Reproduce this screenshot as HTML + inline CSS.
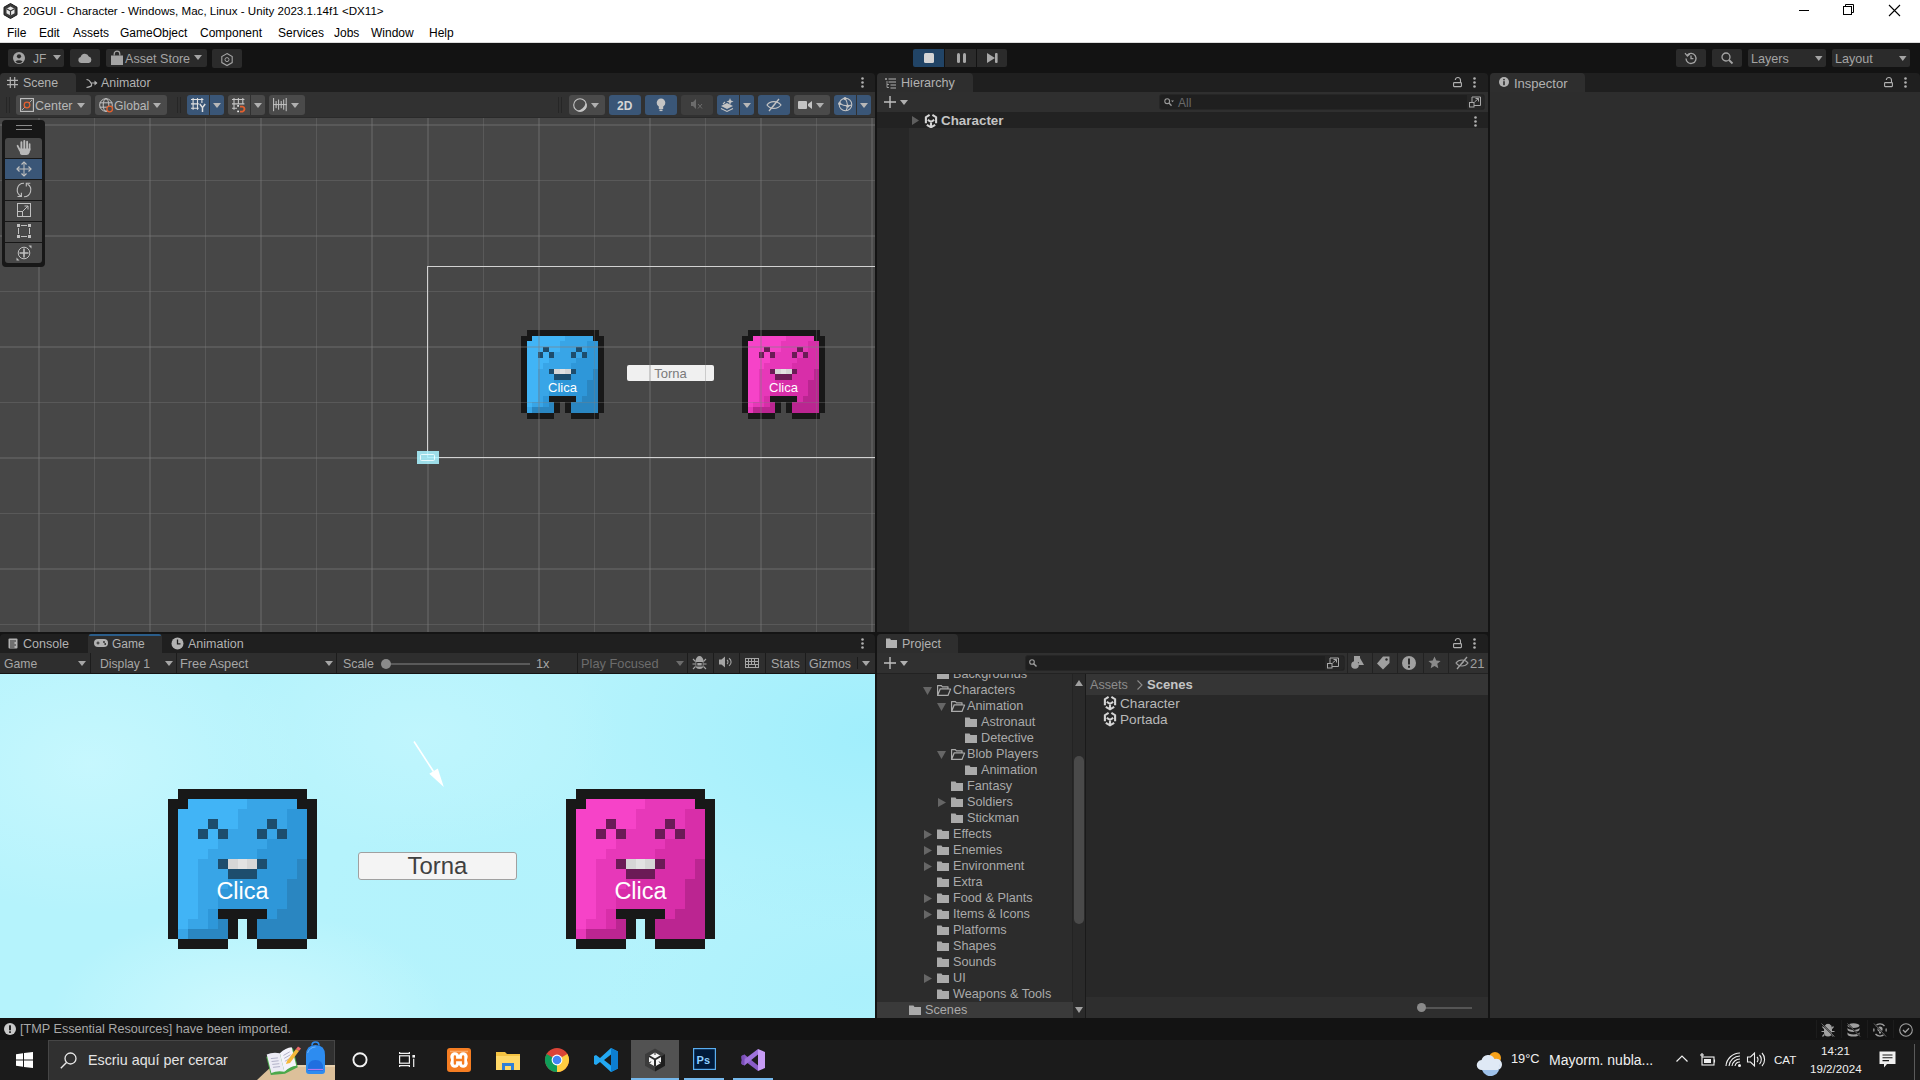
<!DOCTYPE html><html><head><meta charset="utf-8"><style>
*{margin:0;padding:0;box-sizing:border-box}
html,body{width:1920px;height:1080px;overflow:hidden;background:#141414;font-family:"Liberation Sans",sans-serif;}
.a{position:absolute}
.t{position:absolute;white-space:nowrap;line-height:1}
svg{position:absolute;overflow:visible}
</style></head><body>
<div class="a" style="left:0px;top:0px;width:1920px;height:42px;background:#ffffff;"></div>
<div class="a" style="left:0px;top:42px;width:1920px;height:1px;background:#dcdcdc;"></div>
<svg style="left:3px;top:3px;" width="15" height="16" viewBox="0 0 15 16"><path d="M7.5 0.5L14 4.2V11.8L7.5 15.5L1 11.8V4.2Z" fill="#3a3a3a" stroke="#1a1a1a" stroke-width="1"/><path d="M7.5 3.5L11.5 5.8V10.2L7.5 12.5L3.5 10.2V5.8Z" fill="#e8e8e8"/><path d="M7.5 8L7.5 12.5M7.5 8L3.5 5.8M7.5 8L11.5 5.8" stroke="#3a3a3a" stroke-width="1.2"/></svg>
<div class="t" style="left:23px;top:5px;font-size:11.6px;color:#000;">20GUI - Character - Windows, Mac, Linux - Unity 2023.1.14f1 &lt;DX11&gt;</div>
<div class="t" style="left:7px;top:27px;font-size:12px;color:#000;">File</div>
<div class="t" style="left:39px;top:27px;font-size:12px;color:#000;">Edit</div>
<div class="t" style="left:73px;top:27px;font-size:12px;color:#000;">Assets</div>
<div class="t" style="left:120px;top:27px;font-size:12px;color:#000;">GameObject</div>
<div class="t" style="left:200px;top:27px;font-size:12px;color:#000;">Component</div>
<div class="t" style="left:278px;top:27px;font-size:12px;color:#000;">Services</div>
<div class="t" style="left:334px;top:27px;font-size:12px;color:#000;">Jobs</div>
<div class="t" style="left:371px;top:27px;font-size:12px;color:#000;">Window</div>
<div class="t" style="left:429px;top:27px;font-size:12px;color:#000;">Help</div>
<div class="a" style="left:1799px;top:10px;width:10px;height:1px;background:#000;"></div>
<svg style="left:1843px;top:4px;" width="12" height="12" viewBox="0 0 12 12"><rect x="0.5" y="2.5" width="8" height="8" fill="none" stroke="#000" stroke-width="1"/><path d="M2.5 2.5V0.5H10.5V8.5H8.5" fill="none" stroke="#000" stroke-width="1"/></svg>
<svg style="left:1889px;top:5px;" width="11" height="11" viewBox="0 0 11 11"><path d="M0 0L11 11M11 0L0 11" stroke="#000" stroke-width="1.1"/></svg>
<div class="a" style="left:0px;top:43px;width:1920px;height:30px;background:#131313;"></div>
<div class="a" style="left:8px;top:49px;width:56px;height:18px;background:#2b2b2b;border-radius:2px"></div>
<svg style="left:13px;top:52px;" width="12" height="12" viewBox="0 0 12 12"><circle cx="6" cy="6" r="6" fill="#a4a4a4"/><circle cx="6" cy="4.3" r="2.1" fill="#2b2b2b"/><path d="M2.4 9.6A4.2 3 0 0 1 9.6 9.6A5 5 0 0 1 2.4 9.6Z" fill="#2b2b2b"/></svg>
<div class="t" style="left:33px;top:53px;font-size:12px;color:#a4a4a4;">JF</div>
<svg style="left:53px;top:55px;" width="8" height="5" viewBox="0 0 8 5"><path d="M0 0H8L4.0 5Z" fill="#a4a4a4"/></svg>
<div class="a" style="left:70px;top:49px;width:30px;height:18px;background:#2b2b2b;border-radius:2px"></div>
<svg style="left:78px;top:53px;" width="14" height="10" viewBox="0 0 14 10"><path d="M3 10A3 3 0 0 1 2.6 4.1A4.3 4.3 0 0 1 10.8 3.6A3.3 3.3 0 0 1 11 10Z" fill="#a4a4a4"/></svg>
<div class="a" style="left:106px;top:49px;width:101px;height:18px;background:#2b2b2b;border-radius:2px"></div>
<svg style="left:111px;top:51px;" width="12" height="14" viewBox="0 0 12 14"><path d="M3.2 4.5V3A2.8 2.8 0 0 1 8.8 3V4.5" fill="none" stroke="#a4a4a4" stroke-width="1.2"/><rect x="0" y="4.5" width="12" height="9.5" fill="#a4a4a4"/></svg>
<div class="t" style="left:125px;top:53px;font-size:12.6px;color:#a4a4a4;">Asset Store</div>
<svg style="left:194px;top:55px;" width="8" height="5" viewBox="0 0 8 5"><path d="M0 0H8L4.0 5Z" fill="#a4a4a4"/></svg>
<div class="a" style="left:212px;top:49px;width:30px;height:19px;background:#2b2b2b;border-radius:2px"></div>
<svg style="left:221px;top:53px;" width="12" height="13" viewBox="0 0 12 13"><path d="M6 0.6L11.2 3.6V9.6L6 12.6L0.8 9.6V3.6Z" fill="none" stroke="#a4a4a4" stroke-width="1.1"/><circle cx="6" cy="6.6" r="2" fill="none" stroke="#a4a4a4" stroke-width="1"/></svg>
<div class="a" style="left:913px;top:49px;width:31px;height:18px;background:#214466;border-radius:2px 0 0 2px"></div>
<div class="a" style="left:945px;top:49px;width:31px;height:18px;background:#2b2b2b;"></div>
<div class="a" style="left:977px;top:49px;width:30px;height:18px;background:#2b2b2b;border-radius:0 2px 2px 0"></div>
<div class="a" style="left:924px;top:53px;width:10px;height:10px;background:#d4d4d4;border-radius:1.5px"></div>
<div class="a" style="left:957px;top:53px;width:3px;height:10px;background:#a8a8a8;border-radius:1.5px"></div>
<div class="a" style="left:963px;top:53px;width:3px;height:10px;background:#a8a8a8;border-radius:1.5px"></div>
<svg style="left:987px;top:53px;" width="11" height="10" viewBox="0 0 11 10"><path d="M0 0L8 5L0 10Z" fill="#a8a8a8"/><rect x="8" y="0" width="2.6" height="10" rx="1" fill="#a8a8a8"/></svg>
<div class="a" style="left:1676px;top:49px;width:30px;height:18px;background:#2b2b2b;border-radius:2px"></div>
<svg style="left:1685px;top:52px;" width="12" height="12" viewBox="0 0 12 12"><path d="M2.2 3.2A5 5 0 1 1 1 6.5" fill="none" stroke="#a4a4a4" stroke-width="1.3"/><path d="M0 1.2L2.4 4.2L4.8 2" fill="none" stroke="#a4a4a4" stroke-width="1.2"/><path d="M6 3.4V6.6H8.4" fill="none" stroke="#a4a4a4" stroke-width="1.3"/></svg>
<div class="a" style="left:1712px;top:49px;width:30px;height:18px;background:#2b2b2b;border-radius:2px"></div>
<svg style="left:1721px;top:52px;" width="12" height="12" viewBox="0 0 12 12"><circle cx="5" cy="5" r="4" fill="none" stroke="#a4a4a4" stroke-width="1.3"/><path d="M8 8L11.5 11.5" stroke="#a4a4a4" stroke-width="1.8"/></svg>
<div class="a" style="left:1748px;top:49px;width:78px;height:18px;background:#2b2b2b;border-radius:2px"></div>
<div class="t" style="left:1751px;top:53px;font-size:12.6px;color:#a4a4a4;">Layers</div>
<svg style="left:1815px;top:56px;" width="7.5" height="5" viewBox="0 0 7.5 5"><path d="M0 0H7.5L3.75 5Z" fill="#a4a4a4"/></svg>
<div class="a" style="left:1832px;top:49px;width:78px;height:18px;background:#2b2b2b;border-radius:2px"></div>
<div class="t" style="left:1835px;top:53px;font-size:12.6px;color:#a4a4a4;">Layout</div>
<svg style="left:1899px;top:56px;" width="7.5" height="5" viewBox="0 0 7.5 5"><path d="M0 0H7.5L3.75 5Z" fill="#a4a4a4"/></svg>
<div class="a" style="left:0px;top:73px;width:875px;height:19px;background:#1f1f1f;border-radius:4px 4px 0 0"></div>
<div class="a" style="left:0px;top:73px;width:76px;height:19px;background:#313131;border-radius:4px 4px 0 0"></div>
<svg style="left:7px;top:77px;" width="11" height="11" viewBox="0 0 11 11"><path d="M3.3 0V11M7.7 0V11M0 3.3H11M0 7.7H11" stroke="#b2b2b2" stroke-width="1.2"/></svg>
<div class="t" style="left:23px;top:77px;font-size:12.4px;color:#b2b2b2;">Scene</div>
<svg style="left:86px;top:78px;" width="12" height="10" viewBox="0 0 12 10"><path d="M0.5 1.5C3 1.5 4 3 5 5C6 7 7 8.5 0.5 9.5M5 5H10.5" fill="none" stroke="#b2b2b2" stroke-width="1.2"/><path d="M8.5 2.5L11.5 5L8.5 7.5Z" fill="#b2b2b2"/></svg>
<div class="t" style="left:101px;top:77px;font-size:12.4px;color:#b2b2b2;">Animator</div>
<svg style="left:861px;top:77px;" width="3" height="11" viewBox="0 0 3 11"><circle cx="1.5" cy="1.5" r="1.3" fill="#b0b0b0"/><circle cx="1.5" cy="5.5" r="1.3" fill="#b0b0b0"/><circle cx="1.5" cy="9.5" r="1.3" fill="#b0b0b0"/></svg>
<div class="a" style="left:0px;top:92px;width:875px;height:26px;background:#313131;"></div>
<div class="a" style="left:0px;top:117px;width:875px;height:1px;background:#2a2a2a;"></div>
<div class="a" style="left:6px;top:97px;width:1px;height:16px;background:#262626;"></div>
<div class="a" style="left:9px;top:97px;width:1px;height:16px;background:#262626;"></div>
<div class="a" style="left:177px;top:97px;width:1px;height:16px;background:#262626;"></div>
<div class="a" style="left:180px;top:97px;width:1px;height:16px;background:#262626;"></div>
<div class="a" style="left:558px;top:97px;width:1px;height:16px;background:#262626;"></div>
<div class="a" style="left:561px;top:97px;width:1px;height:16px;background:#262626;"></div>
<div class="a" style="left:16px;top:95px;width:75px;height:20px;background:#4a4a4a;border-radius:3px"></div>
<svg style="left:20px;top:98px;" width="14" height="14" viewBox="0 0 14 14"><rect x="0.6" y="0.6" width="12.8" height="12.8" fill="none" stroke="#c4c4c4" stroke-width="1.1"/><path d="M2 12L12 2" stroke="#c4c4c4" stroke-width="0.8"/><circle cx="7" cy="7" r="2.8" fill="#4a4a4a" stroke="#e3602f" stroke-width="1.3"/></svg>
<div class="t" style="left:35px;top:100px;font-size:12.5px;color:#b8b8b8;">Center</div>
<svg style="left:77px;top:103px;" width="8" height="5" viewBox="0 0 8 5"><path d="M0 0H8L4.0 5Z" fill="#b0b0b0"/></svg>
<div class="a" style="left:95px;top:95px;width:72px;height:20px;background:#4a4a4a;border-radius:3px"></div>
<svg style="left:99px;top:98px;" width="14" height="14" viewBox="0 0 14 14"><circle cx="7" cy="7" r="6.3" fill="none" stroke="#c4c4c4" stroke-width="1"/><ellipse cx="7" cy="7" rx="2.8" ry="6.3" fill="none" stroke="#c4c4c4" stroke-width="1"/><path d="M0.7 4.8H13.3M0.7 9.2H13.3" stroke="#c4c4c4" stroke-width="1"/><circle cx="10.7" cy="11" r="2.8" fill="#4a4a4a" stroke="#e3602f" stroke-width="1.3"/></svg>
<div class="t" style="left:114px;top:100px;font-size:12.2px;color:#b8b8b8;">Global</div>
<svg style="left:153px;top:103px;" width="8" height="5" viewBox="0 0 8 5"><path d="M0 0H8L4.0 5Z" fill="#b0b0b0"/></svg>
<div class="a" style="left:187px;top:95px;width:22px;height:20px;background:#3a5677;border-radius:3px 0 0 3px"></div>
<div class="a" style="left:210px;top:95px;width:14px;height:20px;background:#3a5677;border-radius:0 3px 3px 0"></div>
<svg style="left:191px;top:98px;" width="15" height="14" viewBox="0 0 15 14"><path d="M2.1 0V11.7M6.5 0V11.7M10.9 0V5M0 1.5H12.4M0 5.9H8.5M0 10.2H8" stroke="#e0e0e0" stroke-width="1.1"/><rect x="7.7" y="5.4" width="7" height="9" fill="#3a5677"/><path d="M8.8 6L11.5 9.6L14.2 6M11.5 9.6V14" fill="none" stroke="#e0e0e0" stroke-width="1.5"/></svg>
<svg style="left:213px;top:103px;" width="8" height="5" viewBox="0 0 8 5"><path d="M0 0H8L4.0 5Z" fill="#b8b8b8"/></svg>
<div class="a" style="left:228px;top:95px;width:22px;height:20px;background:#4a4a4a;border-radius:3px 0 0 3px"></div>
<div class="a" style="left:251px;top:95px;width:14px;height:20px;background:#4a4a4a;border-radius:0 3px 3px 0"></div>
<svg style="left:232px;top:98px;" width="15" height="15" viewBox="0 0 15 15"><path d="M2 0V11.7M6.4 0V6M10.8 0V6M0 1.5H12.4M0 5.9H12.4M0 10.2H5" stroke="#c4c4c4" stroke-width="1.1"/><rect x="5.2" y="7" width="9.5" height="8" fill="#4a4a4a"/><rect x="5.3" y="7.1" width="1.6" height="1.6" fill="#fff"/><rect x="5.3" y="12.6" width="1.6" height="1.6" fill="#fff"/><path d="M8 8.6H10.6A2.6 2.6 0 0 1 10.6 13.6H8" fill="none" stroke="#e3602f" stroke-width="1.9"/></svg>
<svg style="left:254px;top:103px;" width="8" height="5" viewBox="0 0 8 5"><path d="M0 0H8L4.0 5Z" fill="#b0b0b0"/></svg>
<div class="a" style="left:269px;top:95px;width:36px;height:20px;background:#4a4a4a;border-radius:3px"></div>
<svg style="left:273px;top:98px;" width="14" height="14" viewBox="0 0 14 14"><path d="M0.6 0V13.2M13.2 0V13.2M0 6.6H13.8M3.1 3V10.2M5.6 1.5V11.7M8.2 3V10.2M10.7 1.5V11.7" stroke="#c4c4c4" stroke-width="1"/></svg>
<svg style="left:291px;top:103px;" width="8" height="5" viewBox="0 0 8 5"><path d="M0 0H8L4.0 5Z" fill="#b0b0b0"/></svg>
<div class="a" style="left:569px;top:95px;width:36px;height:20px;background:#4a4a4a;border-radius:3px"></div>
<svg style="left:573px;top:98px;" width="14" height="14" viewBox="0 0 14 14"><circle cx="7" cy="7" r="6.3" fill="none" stroke="#c4c4c4" stroke-width="1.1"/><path d="M12.9 4.4A6.3 6.3 0 0 1 4.4 12.9A12 12 0 0 0 12.9 4.4Z" fill="#c4c4c4"/></svg>
<svg style="left:591px;top:103px;" width="8" height="5" viewBox="0 0 8 5"><path d="M0 0H8L4.0 5Z" fill="#b0b0b0"/></svg>
<div class="a" style="left:609px;top:95px;width:32px;height:20px;background:#3a5677;border-radius:3px"></div>
<div class="t" style="left:617px;top:100px;font-size:12px;color:#d4d4d4;font-weight:bold">2D</div>
<div class="a" style="left:645px;top:95px;width:32px;height:20px;background:#3a5677;border-radius:3px"></div>
<svg style="left:656px;top:98px;" width="10" height="14" viewBox="0 0 10 14"><circle cx="5" cy="4.8" r="4.3" fill="#c4c4c4"/><rect x="2.8" y="8" width="4.4" height="3" fill="#c4c4c4"/><rect x="3.5" y="11.5" width="3" height="1.6" fill="#c4c4c4"/></svg>
<div class="a" style="left:681px;top:95px;width:32px;height:20px;background:#3e3e3e;border-radius:3px"></div>
<svg style="left:691px;top:99px;" width="12" height="11" viewBox="0 0 12 11"><path d="M0 3H2L5 0V10L2 7H0Z" fill="#6c6c6c"/><path d="M7 5L11 9.5M11 5L7 9.5" stroke="#6c6c6c" stroke-width="1"/></svg>
<div class="a" style="left:717px;top:95px;width:22px;height:20px;background:#3a5677;border-radius:3px 0 0 3px"></div>
<div class="a" style="left:740px;top:95px;width:14px;height:20px;background:#3a5677;border-radius:0 3px 3px 0"></div>
<svg style="left:720px;top:98px;" width="15" height="14" viewBox="0 0 15 14"><path d="M1 8L7 11L13 8L7 5Z" fill="#c4c4c4"/><path d="M1 10.5L7 13.5L13 10.5" fill="none" stroke="#c4c4c4" stroke-width="1.1"/><path d="M10 0L11 2.5L13.5 3.5L11 4.5L10 7L9 4.5L6.5 3.5L9 2.5Z" fill="#c4c4c4"/><path d="M3 6L5 4" stroke="#c4c4c4" stroke-width="1.1"/></svg>
<svg style="left:743px;top:103px;" width="8" height="5" viewBox="0 0 8 5"><path d="M0 0H8L4.0 5Z" fill="#b8b8b8"/></svg>
<div class="a" style="left:758px;top:95px;width:32px;height:20px;background:#3a5677;border-radius:3px"></div>
<svg style="left:766px;top:98px;" width="16" height="14" viewBox="0 0 16 14"><path d="M1 7C4 2.5 11.5 2.5 15 7C11.5 11.5 4 11.5 1 7Z" fill="none" stroke="#c4c4c4" stroke-width="1.2"/><path d="M3 13L13 1" stroke="#c4c4c4" stroke-width="1.3"/><path d="M6.5 9L9.5 5.5" stroke="#c4c4c4" stroke-width="1"/></svg>
<div class="a" style="left:794px;top:95px;width:36px;height:20px;background:#4a4a4a;border-radius:3px"></div>
<svg style="left:798px;top:100px;" width="14" height="10" viewBox="0 0 14 10"><rect x="0" y="1" width="9" height="8" rx="1" fill="#c4c4c4"/><path d="M10 4L14 1V9L10 6Z" fill="#c4c4c4"/></svg>
<svg style="left:816px;top:103px;" width="8" height="5" viewBox="0 0 8 5"><path d="M0 0H8L4.0 5Z" fill="#b0b0b0"/></svg>
<div class="a" style="left:834px;top:95px;width:22px;height:20px;background:#3a5677;border-radius:3px 0 0 3px"></div>
<div class="a" style="left:857px;top:95px;width:14px;height:20px;background:#3a5677;border-radius:0 3px 3px 0"></div>
<svg style="left:838px;top:97px;" width="15" height="15" viewBox="0 0 15 15"><circle cx="7.5" cy="7.5" r="6.3" fill="none" stroke="#c4c4c4" stroke-width="1.1"/><path d="M1.5 6.5C5 8.5 10 9.5 13.5 8M7 1.2C9.5 5 10 10 8 13.8" fill="none" stroke="#c4c4c4" stroke-width="1.1"/><circle cx="7" cy="1.5" r="1.6" fill="#c4c4c4"/><circle cx="1.7" cy="6.5" r="1.6" fill="#c4c4c4"/><circle cx="9.7" cy="9" r="1.6" fill="#c4c4c4"/></svg>
<svg style="left:860px;top:103px;" width="8" height="5" viewBox="0 0 8 5"><path d="M0 0H8L4.0 5Z" fill="#b8b8b8"/></svg>
<div class="a" style="left:0;top:118px;width:875px;height:514px;background:#474747;overflow:hidden">
<svg style="left:521px;top:212px" width="82.95" height="88.48" viewBox="0 0 15 16" preserveAspectRatio="none" shape-rendering="crispEdges"><rect x="1" y="0" width="1.02" height="1.02" fill="#181818"/><rect x="2" y="0" width="1.02" height="1.02" fill="#181818"/><rect x="3" y="0" width="1.02" height="1.02" fill="#181818"/><rect x="4" y="0" width="1.02" height="1.02" fill="#181818"/><rect x="5" y="0" width="1.02" height="1.02" fill="#181818"/><rect x="6" y="0" width="1.02" height="1.02" fill="#181818"/><rect x="7" y="0" width="1.02" height="1.02" fill="#181818"/><rect x="8" y="0" width="1.02" height="1.02" fill="#181818"/><rect x="9" y="0" width="1.02" height="1.02" fill="#181818"/><rect x="10" y="0" width="1.02" height="1.02" fill="#181818"/><rect x="11" y="0" width="1.02" height="1.02" fill="#181818"/><rect x="12" y="0" width="1.02" height="1.02" fill="#181818"/><rect x="13" y="0" width="1.02" height="1.02" fill="#181818"/><rect x="0" y="1" width="1.02" height="1.02" fill="#181818"/><rect x="1" y="1" width="1.02" height="1.02" fill="#181818"/><rect x="2" y="1" width="1.02" height="1.02" fill="#41b4f6"/><rect x="3" y="1" width="1.02" height="1.02" fill="#41b4f6"/><rect x="4" y="1" width="1.02" height="1.02" fill="#41b4f6"/><rect x="5" y="1" width="1.02" height="1.02" fill="#41b4f6"/><rect x="6" y="1" width="1.02" height="1.02" fill="#41b4f6"/><rect x="7" y="1" width="1.02" height="1.02" fill="#41b4f6"/><rect x="8" y="1" width="1.02" height="1.02" fill="#38a5e7"/><rect x="9" y="1" width="1.02" height="1.02" fill="#38a5e7"/><rect x="10" y="1" width="1.02" height="1.02" fill="#38a5e7"/><rect x="11" y="1" width="1.02" height="1.02" fill="#38a5e7"/><rect x="12" y="1" width="1.02" height="1.02" fill="#38a5e7"/><rect x="13" y="1" width="1.02" height="1.02" fill="#181818"/><rect x="14" y="1" width="1.02" height="1.02" fill="#181818"/><rect x="0" y="2" width="1.02" height="1.02" fill="#181818"/><rect x="1" y="2" width="1.02" height="1.02" fill="#41b4f6"/><rect x="2" y="2" width="1.02" height="1.02" fill="#41b4f6"/><rect x="3" y="2" width="1.02" height="1.02" fill="#41b4f6"/><rect x="4" y="2" width="1.02" height="1.02" fill="#41b4f6"/><rect x="5" y="2" width="1.02" height="1.02" fill="#41b4f6"/><rect x="6" y="2" width="1.02" height="1.02" fill="#41b4f6"/><rect x="7" y="2" width="1.02" height="1.02" fill="#38a5e7"/><rect x="8" y="2" width="1.02" height="1.02" fill="#38a5e7"/><rect x="9" y="2" width="1.02" height="1.02" fill="#38a5e7"/><rect x="10" y="2" width="1.02" height="1.02" fill="#38a5e7"/><rect x="11" y="2" width="1.02" height="1.02" fill="#38a5e7"/><rect x="12" y="2" width="1.02" height="1.02" fill="#2e97d9"/><rect x="13" y="2" width="1.02" height="1.02" fill="#2e97d9"/><rect x="14" y="2" width="1.02" height="1.02" fill="#181818"/><rect x="0" y="3" width="1.02" height="1.02" fill="#181818"/><rect x="1" y="3" width="1.02" height="1.02" fill="#41b4f6"/><rect x="2" y="3" width="1.02" height="1.02" fill="#41b4f6"/><rect x="3" y="3" width="1.02" height="1.02" fill="#41b4f6"/><rect x="4" y="3" width="1.02" height="1.02" fill="#1d4d6d"/><rect x="5" y="3" width="1.02" height="1.02" fill="#41b4f6"/><rect x="6" y="3" width="1.02" height="1.02" fill="#41b4f6"/><rect x="7" y="3" width="1.02" height="1.02" fill="#38a5e7"/><rect x="8" y="3" width="1.02" height="1.02" fill="#38a5e7"/><rect x="9" y="3" width="1.02" height="1.02" fill="#38a5e7"/><rect x="10" y="3" width="1.02" height="1.02" fill="#1d4d6d"/><rect x="11" y="3" width="1.02" height="1.02" fill="#38a5e7"/><rect x="12" y="3" width="1.02" height="1.02" fill="#2e97d9"/><rect x="13" y="3" width="1.02" height="1.02" fill="#2e97d9"/><rect x="14" y="3" width="1.02" height="1.02" fill="#181818"/><rect x="0" y="4" width="1.02" height="1.02" fill="#181818"/><rect x="1" y="4" width="1.02" height="1.02" fill="#41b4f6"/><rect x="2" y="4" width="1.02" height="1.02" fill="#41b4f6"/><rect x="3" y="4" width="1.02" height="1.02" fill="#1d4d6d"/><rect x="4" y="4" width="1.02" height="1.02" fill="#41b4f6"/><rect x="5" y="4" width="1.02" height="1.02" fill="#1d4d6d"/><rect x="6" y="4" width="1.02" height="1.02" fill="#38a5e7"/><rect x="7" y="4" width="1.02" height="1.02" fill="#38a5e7"/><rect x="8" y="4" width="1.02" height="1.02" fill="#38a5e7"/><rect x="9" y="4" width="1.02" height="1.02" fill="#1d4d6d"/><rect x="10" y="4" width="1.02" height="1.02" fill="#38a5e7"/><rect x="11" y="4" width="1.02" height="1.02" fill="#1d4d6d"/><rect x="12" y="4" width="1.02" height="1.02" fill="#2e97d9"/><rect x="13" y="4" width="1.02" height="1.02" fill="#2e97d9"/><rect x="14" y="4" width="1.02" height="1.02" fill="#181818"/><rect x="0" y="5" width="1.02" height="1.02" fill="#181818"/><rect x="1" y="5" width="1.02" height="1.02" fill="#41b4f6"/><rect x="2" y="5" width="1.02" height="1.02" fill="#41b4f6"/><rect x="3" y="5" width="1.02" height="1.02" fill="#41b4f6"/><rect x="4" y="5" width="1.02" height="1.02" fill="#41b4f6"/><rect x="5" y="5" width="1.02" height="1.02" fill="#38a5e7"/><rect x="6" y="5" width="1.02" height="1.02" fill="#38a5e7"/><rect x="7" y="5" width="1.02" height="1.02" fill="#38a5e7"/><rect x="8" y="5" width="1.02" height="1.02" fill="#38a5e7"/><rect x="9" y="5" width="1.02" height="1.02" fill="#38a5e7"/><rect x="10" y="5" width="1.02" height="1.02" fill="#2e97d9"/><rect x="11" y="5" width="1.02" height="1.02" fill="#2e97d9"/><rect x="12" y="5" width="1.02" height="1.02" fill="#2e97d9"/><rect x="13" y="5" width="1.02" height="1.02" fill="#2e97d9"/><rect x="14" y="5" width="1.02" height="1.02" fill="#181818"/><rect x="0" y="6" width="1.02" height="1.02" fill="#181818"/><rect x="1" y="6" width="1.02" height="1.02" fill="#41b4f6"/><rect x="2" y="6" width="1.02" height="1.02" fill="#41b4f6"/><rect x="3" y="6" width="1.02" height="1.02" fill="#41b4f6"/><rect x="4" y="6" width="1.02" height="1.02" fill="#38a5e7"/><rect x="5" y="6" width="1.02" height="1.02" fill="#38a5e7"/><rect x="6" y="6" width="1.02" height="1.02" fill="#38a5e7"/><rect x="7" y="6" width="1.02" height="1.02" fill="#38a5e7"/><rect x="8" y="6" width="1.02" height="1.02" fill="#38a5e7"/><rect x="9" y="6" width="1.02" height="1.02" fill="#2e97d9"/><rect x="10" y="6" width="1.02" height="1.02" fill="#2e97d9"/><rect x="11" y="6" width="1.02" height="1.02" fill="#2e97d9"/><rect x="12" y="6" width="1.02" height="1.02" fill="#2e97d9"/><rect x="13" y="6" width="1.02" height="1.02" fill="#2e97d9"/><rect x="14" y="6" width="1.02" height="1.02" fill="#181818"/><rect x="0" y="7" width="1.02" height="1.02" fill="#181818"/><rect x="1" y="7" width="1.02" height="1.02" fill="#41b4f6"/><rect x="2" y="7" width="1.02" height="1.02" fill="#41b4f6"/><rect x="3" y="7" width="1.02" height="1.02" fill="#38a5e7"/><rect x="4" y="7" width="1.02" height="1.02" fill="#38a5e7"/><rect x="5" y="7" width="1.02" height="1.02" fill="#1d4d6d"/><rect x="6" y="7" width="1.02" height="1.02" fill="#d6d6d6"/><rect x="7" y="7" width="1.02" height="1.02" fill="#e2e2e2"/><rect x="8" y="7" width="1.02" height="1.02" fill="#d6d6d6"/><rect x="9" y="7" width="1.02" height="1.02" fill="#1d4d6d"/><rect x="10" y="7" width="1.02" height="1.02" fill="#2e97d9"/><rect x="11" y="7" width="1.02" height="1.02" fill="#2e97d9"/><rect x="12" y="7" width="1.02" height="1.02" fill="#2e97d9"/><rect x="13" y="7" width="1.02" height="1.02" fill="#2a86c1"/><rect x="14" y="7" width="1.02" height="1.02" fill="#181818"/><rect x="0" y="8" width="1.02" height="1.02" fill="#181818"/><rect x="1" y="8" width="1.02" height="1.02" fill="#41b4f6"/><rect x="2" y="8" width="1.02" height="1.02" fill="#41b4f6"/><rect x="3" y="8" width="1.02" height="1.02" fill="#38a5e7"/><rect x="4" y="8" width="1.02" height="1.02" fill="#38a5e7"/><rect x="5" y="8" width="1.02" height="1.02" fill="#38a5e7"/><rect x="6" y="8" width="1.02" height="1.02" fill="#1d4d6d"/><rect x="7" y="8" width="1.02" height="1.02" fill="#1d4d6d"/><rect x="8" y="8" width="1.02" height="1.02" fill="#1d4d6d"/><rect x="9" y="8" width="1.02" height="1.02" fill="#2e97d9"/><rect x="10" y="8" width="1.02" height="1.02" fill="#2e97d9"/><rect x="11" y="8" width="1.02" height="1.02" fill="#2e97d9"/><rect x="12" y="8" width="1.02" height="1.02" fill="#2e97d9"/><rect x="13" y="8" width="1.02" height="1.02" fill="#2a86c1"/><rect x="14" y="8" width="1.02" height="1.02" fill="#181818"/><rect x="0" y="9" width="1.02" height="1.02" fill="#181818"/><rect x="1" y="9" width="1.02" height="1.02" fill="#41b4f6"/><rect x="2" y="9" width="1.02" height="1.02" fill="#41b4f6"/><rect x="3" y="9" width="1.02" height="1.02" fill="#38a5e7"/><rect x="4" y="9" width="1.02" height="1.02" fill="#38a5e7"/><rect x="5" y="9" width="1.02" height="1.02" fill="#38a5e7"/><rect x="6" y="9" width="1.02" height="1.02" fill="#2e97d9"/><rect x="7" y="9" width="1.02" height="1.02" fill="#2e97d9"/><rect x="8" y="9" width="1.02" height="1.02" fill="#2e97d9"/><rect x="9" y="9" width="1.02" height="1.02" fill="#2e97d9"/><rect x="10" y="9" width="1.02" height="1.02" fill="#2e97d9"/><rect x="11" y="9" width="1.02" height="1.02" fill="#2e97d9"/><rect x="12" y="9" width="1.02" height="1.02" fill="#2a86c1"/><rect x="13" y="9" width="1.02" height="1.02" fill="#2a86c1"/><rect x="14" y="9" width="1.02" height="1.02" fill="#181818"/><rect x="0" y="10" width="1.02" height="1.02" fill="#181818"/><rect x="1" y="10" width="1.02" height="1.02" fill="#41b4f6"/><rect x="2" y="10" width="1.02" height="1.02" fill="#41b4f6"/><rect x="3" y="10" width="1.02" height="1.02" fill="#38a5e7"/><rect x="4" y="10" width="1.02" height="1.02" fill="#38a5e7"/><rect x="5" y="10" width="1.02" height="1.02" fill="#2e97d9"/><rect x="6" y="10" width="1.02" height="1.02" fill="#2e97d9"/><rect x="7" y="10" width="1.02" height="1.02" fill="#2e97d9"/><rect x="8" y="10" width="1.02" height="1.02" fill="#2e97d9"/><rect x="9" y="10" width="1.02" height="1.02" fill="#2e97d9"/><rect x="10" y="10" width="1.02" height="1.02" fill="#2e97d9"/><rect x="11" y="10" width="1.02" height="1.02" fill="#2e97d9"/><rect x="12" y="10" width="1.02" height="1.02" fill="#2a86c1"/><rect x="13" y="10" width="1.02" height="1.02" fill="#2a86c1"/><rect x="14" y="10" width="1.02" height="1.02" fill="#181818"/><rect x="0" y="11" width="1.02" height="1.02" fill="#181818"/><rect x="1" y="11" width="1.02" height="1.02" fill="#41b4f6"/><rect x="2" y="11" width="1.02" height="1.02" fill="#41b4f6"/><rect x="3" y="11" width="1.02" height="1.02" fill="#38a5e7"/><rect x="4" y="11" width="1.02" height="1.02" fill="#38a5e7"/><rect x="5" y="11" width="1.02" height="1.02" fill="#2e97d9"/><rect x="6" y="11" width="1.02" height="1.02" fill="#2e97d9"/><rect x="7" y="11" width="1.02" height="1.02" fill="#2e97d9"/><rect x="8" y="11" width="1.02" height="1.02" fill="#2e97d9"/><rect x="9" y="11" width="1.02" height="1.02" fill="#2e97d9"/><rect x="10" y="11" width="1.02" height="1.02" fill="#2e97d9"/><rect x="11" y="11" width="1.02" height="1.02" fill="#2e97d9"/><rect x="12" y="11" width="1.02" height="1.02" fill="#2a86c1"/><rect x="13" y="11" width="1.02" height="1.02" fill="#2a86c1"/><rect x="14" y="11" width="1.02" height="1.02" fill="#181818"/><rect x="0" y="12" width="1.02" height="1.02" fill="#181818"/><rect x="1" y="12" width="1.02" height="1.02" fill="#41b4f6"/><rect x="2" y="12" width="1.02" height="1.02" fill="#41b4f6"/><rect x="3" y="12" width="1.02" height="1.02" fill="#38a5e7"/><rect x="4" y="12" width="1.02" height="1.02" fill="#2e97d9"/><rect x="5" y="12" width="1.02" height="1.02" fill="#181818"/><rect x="6" y="12" width="1.02" height="1.02" fill="#181818"/><rect x="7" y="12" width="1.02" height="1.02" fill="#181818"/><rect x="8" y="12" width="1.02" height="1.02" fill="#181818"/><rect x="9" y="12" width="1.02" height="1.02" fill="#181818"/><rect x="10" y="12" width="1.02" height="1.02" fill="#2e97d9"/><rect x="11" y="12" width="1.02" height="1.02" fill="#2a86c1"/><rect x="12" y="12" width="1.02" height="1.02" fill="#2a86c1"/><rect x="13" y="12" width="1.02" height="1.02" fill="#2a86c1"/><rect x="14" y="12" width="1.02" height="1.02" fill="#181818"/><rect x="0" y="13" width="1.02" height="1.02" fill="#181818"/><rect x="1" y="13" width="1.02" height="1.02" fill="#41b4f6"/><rect x="2" y="13" width="1.02" height="1.02" fill="#38a5e7"/><rect x="3" y="13" width="1.02" height="1.02" fill="#38a5e7"/><rect x="4" y="13" width="1.02" height="1.02" fill="#2e97d9"/><rect x="5" y="13" width="1.02" height="1.02" fill="#2a86c1"/><rect x="6" y="13" width="1.02" height="1.02" fill="#181818"/><rect x="8" y="13" width="1.02" height="1.02" fill="#181818"/><rect x="9" y="13" width="1.02" height="1.02" fill="#2a86c1"/><rect x="10" y="13" width="1.02" height="1.02" fill="#2a86c1"/><rect x="11" y="13" width="1.02" height="1.02" fill="#2a86c1"/><rect x="12" y="13" width="1.02" height="1.02" fill="#2a86c1"/><rect x="13" y="13" width="1.02" height="1.02" fill="#2a86c1"/><rect x="14" y="13" width="1.02" height="1.02" fill="#181818"/><rect x="0" y="14" width="1.02" height="1.02" fill="#181818"/><rect x="1" y="14" width="1.02" height="1.02" fill="#38a5e7"/><rect x="2" y="14" width="1.02" height="1.02" fill="#2a86c1"/><rect x="3" y="14" width="1.02" height="1.02" fill="#2a86c1"/><rect x="4" y="14" width="1.02" height="1.02" fill="#2a86c1"/><rect x="5" y="14" width="1.02" height="1.02" fill="#2a86c1"/><rect x="6" y="14" width="1.02" height="1.02" fill="#181818"/><rect x="8" y="14" width="1.02" height="1.02" fill="#181818"/><rect x="9" y="14" width="1.02" height="1.02" fill="#2a86c1"/><rect x="10" y="14" width="1.02" height="1.02" fill="#2a86c1"/><rect x="11" y="14" width="1.02" height="1.02" fill="#2a86c1"/><rect x="12" y="14" width="1.02" height="1.02" fill="#2a86c1"/><rect x="13" y="14" width="1.02" height="1.02" fill="#2a86c1"/><rect x="14" y="14" width="1.02" height="1.02" fill="#181818"/><rect x="1" y="15" width="1.02" height="1.02" fill="#181818"/><rect x="2" y="15" width="1.02" height="1.02" fill="#181818"/><rect x="3" y="15" width="1.02" height="1.02" fill="#181818"/><rect x="4" y="15" width="1.02" height="1.02" fill="#181818"/><rect x="5" y="15" width="1.02" height="1.02" fill="#181818"/><rect x="9" y="15" width="1.02" height="1.02" fill="#181818"/><rect x="10" y="15" width="1.02" height="1.02" fill="#181818"/><rect x="11" y="15" width="1.02" height="1.02" fill="#181818"/><rect x="12" y="15" width="1.02" height="1.02" fill="#181818"/><rect x="13" y="15" width="1.02" height="1.02" fill="#181818"/></svg>
<div class="t" style="left:521px;top:262.5px;width:82.95px;text-align:center;font-size:13px;color:#fff">Clica</div>
<svg style="left:742px;top:212px" width="82.95" height="88.48" viewBox="0 0 15 16" preserveAspectRatio="none" shape-rendering="crispEdges"><rect x="1" y="0" width="1.02" height="1.02" fill="#181818"/><rect x="2" y="0" width="1.02" height="1.02" fill="#181818"/><rect x="3" y="0" width="1.02" height="1.02" fill="#181818"/><rect x="4" y="0" width="1.02" height="1.02" fill="#181818"/><rect x="5" y="0" width="1.02" height="1.02" fill="#181818"/><rect x="6" y="0" width="1.02" height="1.02" fill="#181818"/><rect x="7" y="0" width="1.02" height="1.02" fill="#181818"/><rect x="8" y="0" width="1.02" height="1.02" fill="#181818"/><rect x="9" y="0" width="1.02" height="1.02" fill="#181818"/><rect x="10" y="0" width="1.02" height="1.02" fill="#181818"/><rect x="11" y="0" width="1.02" height="1.02" fill="#181818"/><rect x="12" y="0" width="1.02" height="1.02" fill="#181818"/><rect x="13" y="0" width="1.02" height="1.02" fill="#181818"/><rect x="0" y="1" width="1.02" height="1.02" fill="#181818"/><rect x="1" y="1" width="1.02" height="1.02" fill="#181818"/><rect x="2" y="1" width="1.02" height="1.02" fill="#f643c8"/><rect x="3" y="1" width="1.02" height="1.02" fill="#f643c8"/><rect x="4" y="1" width="1.02" height="1.02" fill="#f643c8"/><rect x="5" y="1" width="1.02" height="1.02" fill="#f643c8"/><rect x="6" y="1" width="1.02" height="1.02" fill="#f643c8"/><rect x="7" y="1" width="1.02" height="1.02" fill="#f643c8"/><rect x="8" y="1" width="1.02" height="1.02" fill="#e738b9"/><rect x="9" y="1" width="1.02" height="1.02" fill="#e738b9"/><rect x="10" y="1" width="1.02" height="1.02" fill="#e738b9"/><rect x="11" y="1" width="1.02" height="1.02" fill="#e738b9"/><rect x="12" y="1" width="1.02" height="1.02" fill="#e738b9"/><rect x="13" y="1" width="1.02" height="1.02" fill="#181818"/><rect x="14" y="1" width="1.02" height="1.02" fill="#181818"/><rect x="0" y="2" width="1.02" height="1.02" fill="#181818"/><rect x="1" y="2" width="1.02" height="1.02" fill="#f643c8"/><rect x="2" y="2" width="1.02" height="1.02" fill="#f643c8"/><rect x="3" y="2" width="1.02" height="1.02" fill="#f643c8"/><rect x="4" y="2" width="1.02" height="1.02" fill="#f643c8"/><rect x="5" y="2" width="1.02" height="1.02" fill="#f643c8"/><rect x="6" y="2" width="1.02" height="1.02" fill="#f643c8"/><rect x="7" y="2" width="1.02" height="1.02" fill="#e738b9"/><rect x="8" y="2" width="1.02" height="1.02" fill="#e738b9"/><rect x="9" y="2" width="1.02" height="1.02" fill="#e738b9"/><rect x="10" y="2" width="1.02" height="1.02" fill="#e738b9"/><rect x="11" y="2" width="1.02" height="1.02" fill="#e738b9"/><rect x="12" y="2" width="1.02" height="1.02" fill="#d82ea9"/><rect x="13" y="2" width="1.02" height="1.02" fill="#d82ea9"/><rect x="14" y="2" width="1.02" height="1.02" fill="#181818"/><rect x="0" y="3" width="1.02" height="1.02" fill="#181818"/><rect x="1" y="3" width="1.02" height="1.02" fill="#f643c8"/><rect x="2" y="3" width="1.02" height="1.02" fill="#f643c8"/><rect x="3" y="3" width="1.02" height="1.02" fill="#f643c8"/><rect x="4" y="3" width="1.02" height="1.02" fill="#6b1b56"/><rect x="5" y="3" width="1.02" height="1.02" fill="#f643c8"/><rect x="6" y="3" width="1.02" height="1.02" fill="#f643c8"/><rect x="7" y="3" width="1.02" height="1.02" fill="#e738b9"/><rect x="8" y="3" width="1.02" height="1.02" fill="#e738b9"/><rect x="9" y="3" width="1.02" height="1.02" fill="#e738b9"/><rect x="10" y="3" width="1.02" height="1.02" fill="#6b1b56"/><rect x="11" y="3" width="1.02" height="1.02" fill="#e738b9"/><rect x="12" y="3" width="1.02" height="1.02" fill="#d82ea9"/><rect x="13" y="3" width="1.02" height="1.02" fill="#d82ea9"/><rect x="14" y="3" width="1.02" height="1.02" fill="#181818"/><rect x="0" y="4" width="1.02" height="1.02" fill="#181818"/><rect x="1" y="4" width="1.02" height="1.02" fill="#f643c8"/><rect x="2" y="4" width="1.02" height="1.02" fill="#f643c8"/><rect x="3" y="4" width="1.02" height="1.02" fill="#6b1b56"/><rect x="4" y="4" width="1.02" height="1.02" fill="#f643c8"/><rect x="5" y="4" width="1.02" height="1.02" fill="#6b1b56"/><rect x="6" y="4" width="1.02" height="1.02" fill="#e738b9"/><rect x="7" y="4" width="1.02" height="1.02" fill="#e738b9"/><rect x="8" y="4" width="1.02" height="1.02" fill="#e738b9"/><rect x="9" y="4" width="1.02" height="1.02" fill="#6b1b56"/><rect x="10" y="4" width="1.02" height="1.02" fill="#e738b9"/><rect x="11" y="4" width="1.02" height="1.02" fill="#6b1b56"/><rect x="12" y="4" width="1.02" height="1.02" fill="#d82ea9"/><rect x="13" y="4" width="1.02" height="1.02" fill="#d82ea9"/><rect x="14" y="4" width="1.02" height="1.02" fill="#181818"/><rect x="0" y="5" width="1.02" height="1.02" fill="#181818"/><rect x="1" y="5" width="1.02" height="1.02" fill="#f643c8"/><rect x="2" y="5" width="1.02" height="1.02" fill="#f643c8"/><rect x="3" y="5" width="1.02" height="1.02" fill="#f643c8"/><rect x="4" y="5" width="1.02" height="1.02" fill="#f643c8"/><rect x="5" y="5" width="1.02" height="1.02" fill="#e738b9"/><rect x="6" y="5" width="1.02" height="1.02" fill="#e738b9"/><rect x="7" y="5" width="1.02" height="1.02" fill="#e738b9"/><rect x="8" y="5" width="1.02" height="1.02" fill="#e738b9"/><rect x="9" y="5" width="1.02" height="1.02" fill="#e738b9"/><rect x="10" y="5" width="1.02" height="1.02" fill="#d82ea9"/><rect x="11" y="5" width="1.02" height="1.02" fill="#d82ea9"/><rect x="12" y="5" width="1.02" height="1.02" fill="#d82ea9"/><rect x="13" y="5" width="1.02" height="1.02" fill="#d82ea9"/><rect x="14" y="5" width="1.02" height="1.02" fill="#181818"/><rect x="0" y="6" width="1.02" height="1.02" fill="#181818"/><rect x="1" y="6" width="1.02" height="1.02" fill="#f643c8"/><rect x="2" y="6" width="1.02" height="1.02" fill="#f643c8"/><rect x="3" y="6" width="1.02" height="1.02" fill="#f643c8"/><rect x="4" y="6" width="1.02" height="1.02" fill="#e738b9"/><rect x="5" y="6" width="1.02" height="1.02" fill="#e738b9"/><rect x="6" y="6" width="1.02" height="1.02" fill="#e738b9"/><rect x="7" y="6" width="1.02" height="1.02" fill="#e738b9"/><rect x="8" y="6" width="1.02" height="1.02" fill="#e738b9"/><rect x="9" y="6" width="1.02" height="1.02" fill="#d82ea9"/><rect x="10" y="6" width="1.02" height="1.02" fill="#d82ea9"/><rect x="11" y="6" width="1.02" height="1.02" fill="#d82ea9"/><rect x="12" y="6" width="1.02" height="1.02" fill="#d82ea9"/><rect x="13" y="6" width="1.02" height="1.02" fill="#d82ea9"/><rect x="14" y="6" width="1.02" height="1.02" fill="#181818"/><rect x="0" y="7" width="1.02" height="1.02" fill="#181818"/><rect x="1" y="7" width="1.02" height="1.02" fill="#f643c8"/><rect x="2" y="7" width="1.02" height="1.02" fill="#f643c8"/><rect x="3" y="7" width="1.02" height="1.02" fill="#e738b9"/><rect x="4" y="7" width="1.02" height="1.02" fill="#e738b9"/><rect x="5" y="7" width="1.02" height="1.02" fill="#6b1b56"/><rect x="6" y="7" width="1.02" height="1.02" fill="#d6d6d6"/><rect x="7" y="7" width="1.02" height="1.02" fill="#e2e2e2"/><rect x="8" y="7" width="1.02" height="1.02" fill="#d6d6d6"/><rect x="9" y="7" width="1.02" height="1.02" fill="#6b1b56"/><rect x="10" y="7" width="1.02" height="1.02" fill="#d82ea9"/><rect x="11" y="7" width="1.02" height="1.02" fill="#d82ea9"/><rect x="12" y="7" width="1.02" height="1.02" fill="#d82ea9"/><rect x="13" y="7" width="1.02" height="1.02" fill="#bb2591"/><rect x="14" y="7" width="1.02" height="1.02" fill="#181818"/><rect x="0" y="8" width="1.02" height="1.02" fill="#181818"/><rect x="1" y="8" width="1.02" height="1.02" fill="#f643c8"/><rect x="2" y="8" width="1.02" height="1.02" fill="#f643c8"/><rect x="3" y="8" width="1.02" height="1.02" fill="#e738b9"/><rect x="4" y="8" width="1.02" height="1.02" fill="#e738b9"/><rect x="5" y="8" width="1.02" height="1.02" fill="#e738b9"/><rect x="6" y="8" width="1.02" height="1.02" fill="#6b1b56"/><rect x="7" y="8" width="1.02" height="1.02" fill="#6b1b56"/><rect x="8" y="8" width="1.02" height="1.02" fill="#6b1b56"/><rect x="9" y="8" width="1.02" height="1.02" fill="#d82ea9"/><rect x="10" y="8" width="1.02" height="1.02" fill="#d82ea9"/><rect x="11" y="8" width="1.02" height="1.02" fill="#d82ea9"/><rect x="12" y="8" width="1.02" height="1.02" fill="#d82ea9"/><rect x="13" y="8" width="1.02" height="1.02" fill="#bb2591"/><rect x="14" y="8" width="1.02" height="1.02" fill="#181818"/><rect x="0" y="9" width="1.02" height="1.02" fill="#181818"/><rect x="1" y="9" width="1.02" height="1.02" fill="#f643c8"/><rect x="2" y="9" width="1.02" height="1.02" fill="#f643c8"/><rect x="3" y="9" width="1.02" height="1.02" fill="#e738b9"/><rect x="4" y="9" width="1.02" height="1.02" fill="#e738b9"/><rect x="5" y="9" width="1.02" height="1.02" fill="#e738b9"/><rect x="6" y="9" width="1.02" height="1.02" fill="#d82ea9"/><rect x="7" y="9" width="1.02" height="1.02" fill="#d82ea9"/><rect x="8" y="9" width="1.02" height="1.02" fill="#d82ea9"/><rect x="9" y="9" width="1.02" height="1.02" fill="#d82ea9"/><rect x="10" y="9" width="1.02" height="1.02" fill="#d82ea9"/><rect x="11" y="9" width="1.02" height="1.02" fill="#d82ea9"/><rect x="12" y="9" width="1.02" height="1.02" fill="#bb2591"/><rect x="13" y="9" width="1.02" height="1.02" fill="#bb2591"/><rect x="14" y="9" width="1.02" height="1.02" fill="#181818"/><rect x="0" y="10" width="1.02" height="1.02" fill="#181818"/><rect x="1" y="10" width="1.02" height="1.02" fill="#f643c8"/><rect x="2" y="10" width="1.02" height="1.02" fill="#f643c8"/><rect x="3" y="10" width="1.02" height="1.02" fill="#e738b9"/><rect x="4" y="10" width="1.02" height="1.02" fill="#e738b9"/><rect x="5" y="10" width="1.02" height="1.02" fill="#d82ea9"/><rect x="6" y="10" width="1.02" height="1.02" fill="#d82ea9"/><rect x="7" y="10" width="1.02" height="1.02" fill="#d82ea9"/><rect x="8" y="10" width="1.02" height="1.02" fill="#d82ea9"/><rect x="9" y="10" width="1.02" height="1.02" fill="#d82ea9"/><rect x="10" y="10" width="1.02" height="1.02" fill="#d82ea9"/><rect x="11" y="10" width="1.02" height="1.02" fill="#d82ea9"/><rect x="12" y="10" width="1.02" height="1.02" fill="#bb2591"/><rect x="13" y="10" width="1.02" height="1.02" fill="#bb2591"/><rect x="14" y="10" width="1.02" height="1.02" fill="#181818"/><rect x="0" y="11" width="1.02" height="1.02" fill="#181818"/><rect x="1" y="11" width="1.02" height="1.02" fill="#f643c8"/><rect x="2" y="11" width="1.02" height="1.02" fill="#f643c8"/><rect x="3" y="11" width="1.02" height="1.02" fill="#e738b9"/><rect x="4" y="11" width="1.02" height="1.02" fill="#e738b9"/><rect x="5" y="11" width="1.02" height="1.02" fill="#d82ea9"/><rect x="6" y="11" width="1.02" height="1.02" fill="#d82ea9"/><rect x="7" y="11" width="1.02" height="1.02" fill="#d82ea9"/><rect x="8" y="11" width="1.02" height="1.02" fill="#d82ea9"/><rect x="9" y="11" width="1.02" height="1.02" fill="#d82ea9"/><rect x="10" y="11" width="1.02" height="1.02" fill="#d82ea9"/><rect x="11" y="11" width="1.02" height="1.02" fill="#d82ea9"/><rect x="12" y="11" width="1.02" height="1.02" fill="#bb2591"/><rect x="13" y="11" width="1.02" height="1.02" fill="#bb2591"/><rect x="14" y="11" width="1.02" height="1.02" fill="#181818"/><rect x="0" y="12" width="1.02" height="1.02" fill="#181818"/><rect x="1" y="12" width="1.02" height="1.02" fill="#f643c8"/><rect x="2" y="12" width="1.02" height="1.02" fill="#f643c8"/><rect x="3" y="12" width="1.02" height="1.02" fill="#e738b9"/><rect x="4" y="12" width="1.02" height="1.02" fill="#d82ea9"/><rect x="5" y="12" width="1.02" height="1.02" fill="#181818"/><rect x="6" y="12" width="1.02" height="1.02" fill="#181818"/><rect x="7" y="12" width="1.02" height="1.02" fill="#181818"/><rect x="8" y="12" width="1.02" height="1.02" fill="#181818"/><rect x="9" y="12" width="1.02" height="1.02" fill="#181818"/><rect x="10" y="12" width="1.02" height="1.02" fill="#d82ea9"/><rect x="11" y="12" width="1.02" height="1.02" fill="#bb2591"/><rect x="12" y="12" width="1.02" height="1.02" fill="#bb2591"/><rect x="13" y="12" width="1.02" height="1.02" fill="#bb2591"/><rect x="14" y="12" width="1.02" height="1.02" fill="#181818"/><rect x="0" y="13" width="1.02" height="1.02" fill="#181818"/><rect x="1" y="13" width="1.02" height="1.02" fill="#f643c8"/><rect x="2" y="13" width="1.02" height="1.02" fill="#e738b9"/><rect x="3" y="13" width="1.02" height="1.02" fill="#e738b9"/><rect x="4" y="13" width="1.02" height="1.02" fill="#d82ea9"/><rect x="5" y="13" width="1.02" height="1.02" fill="#bb2591"/><rect x="6" y="13" width="1.02" height="1.02" fill="#181818"/><rect x="8" y="13" width="1.02" height="1.02" fill="#181818"/><rect x="9" y="13" width="1.02" height="1.02" fill="#bb2591"/><rect x="10" y="13" width="1.02" height="1.02" fill="#bb2591"/><rect x="11" y="13" width="1.02" height="1.02" fill="#bb2591"/><rect x="12" y="13" width="1.02" height="1.02" fill="#bb2591"/><rect x="13" y="13" width="1.02" height="1.02" fill="#bb2591"/><rect x="14" y="13" width="1.02" height="1.02" fill="#181818"/><rect x="0" y="14" width="1.02" height="1.02" fill="#181818"/><rect x="1" y="14" width="1.02" height="1.02" fill="#e738b9"/><rect x="2" y="14" width="1.02" height="1.02" fill="#bb2591"/><rect x="3" y="14" width="1.02" height="1.02" fill="#bb2591"/><rect x="4" y="14" width="1.02" height="1.02" fill="#bb2591"/><rect x="5" y="14" width="1.02" height="1.02" fill="#bb2591"/><rect x="6" y="14" width="1.02" height="1.02" fill="#181818"/><rect x="8" y="14" width="1.02" height="1.02" fill="#181818"/><rect x="9" y="14" width="1.02" height="1.02" fill="#bb2591"/><rect x="10" y="14" width="1.02" height="1.02" fill="#bb2591"/><rect x="11" y="14" width="1.02" height="1.02" fill="#bb2591"/><rect x="12" y="14" width="1.02" height="1.02" fill="#bb2591"/><rect x="13" y="14" width="1.02" height="1.02" fill="#bb2591"/><rect x="14" y="14" width="1.02" height="1.02" fill="#181818"/><rect x="1" y="15" width="1.02" height="1.02" fill="#181818"/><rect x="2" y="15" width="1.02" height="1.02" fill="#181818"/><rect x="3" y="15" width="1.02" height="1.02" fill="#181818"/><rect x="4" y="15" width="1.02" height="1.02" fill="#181818"/><rect x="5" y="15" width="1.02" height="1.02" fill="#181818"/><rect x="9" y="15" width="1.02" height="1.02" fill="#181818"/><rect x="10" y="15" width="1.02" height="1.02" fill="#181818"/><rect x="11" y="15" width="1.02" height="1.02" fill="#181818"/><rect x="12" y="15" width="1.02" height="1.02" fill="#181818"/><rect x="13" y="15" width="1.02" height="1.02" fill="#181818"/></svg>
<div class="t" style="left:742px;top:262.5px;width:82.95px;text-align:center;font-size:13px;color:#fff">Clica</div>
<div class="a" style="left:627px;top:247px;width:87px;height:16px;background:#f0f0f0;border-radius:2px"></div>
<div class="t" style="left:627px;top:249px;width:87px;text-align:center;font-size:13px;color:#7a7a7a">Torna</div>
<div class="a" style="left:38.15px;top:0;width:1.5px;height:514px;background:rgba(128,128,128,0.33)"></div>
<div class="a" style="left:93.70px;top:0;width:1.5px;height:514px;background:rgba(128,128,128,0.33)"></div>
<div class="a" style="left:149.25px;top:0;width:1.5px;height:514px;background:rgba(128,128,128,0.33)"></div>
<div class="a" style="left:204.80px;top:0;width:1.5px;height:514px;background:rgba(128,128,128,0.33)"></div>
<div class="a" style="left:260.35px;top:0;width:1.5px;height:514px;background:rgba(128,128,128,0.33)"></div>
<div class="a" style="left:315.90px;top:0;width:1.5px;height:514px;background:rgba(128,128,128,0.33)"></div>
<div class="a" style="left:371.45px;top:0;width:1.5px;height:514px;background:rgba(128,128,128,0.33)"></div>
<div class="a" style="left:427.00px;top:0;width:1.5px;height:514px;background:rgba(128,128,128,0.33)"></div>
<div class="a" style="left:482.55px;top:0;width:1.5px;height:514px;background:rgba(128,128,128,0.33)"></div>
<div class="a" style="left:538.10px;top:0;width:1.5px;height:514px;background:rgba(128,128,128,0.33)"></div>
<div class="a" style="left:593.65px;top:0;width:1.5px;height:514px;background:rgba(128,128,128,0.33)"></div>
<div class="a" style="left:649.20px;top:0;width:1.5px;height:514px;background:rgba(128,128,128,0.33)"></div>
<div class="a" style="left:704.75px;top:0;width:1.5px;height:514px;background:rgba(128,128,128,0.33)"></div>
<div class="a" style="left:760.30px;top:0;width:1.5px;height:514px;background:rgba(128,128,128,0.33)"></div>
<div class="a" style="left:815.85px;top:0;width:1.5px;height:514px;background:rgba(128,128,128,0.33)"></div>
<div class="a" style="left:871.40px;top:0;width:1.5px;height:514px;background:rgba(128,128,128,0.33)"></div>
<div class="a" style="left:0;top:6.25px;width:875px;height:1.5px;background:rgba(128,128,128,0.33)"></div>
<div class="a" style="left:0;top:61.75px;width:875px;height:1.5px;background:rgba(128,128,128,0.33)"></div>
<div class="a" style="left:0;top:117.25px;width:875px;height:1.5px;background:rgba(128,128,128,0.33)"></div>
<div class="a" style="left:0;top:172.75px;width:875px;height:1.5px;background:rgba(128,128,128,0.33)"></div>
<div class="a" style="left:0;top:228.25px;width:875px;height:1.5px;background:rgba(128,128,128,0.33)"></div>
<div class="a" style="left:0;top:283.75px;width:875px;height:1.5px;background:rgba(128,128,128,0.33)"></div>
<div class="a" style="left:0;top:339.25px;width:875px;height:1.5px;background:rgba(128,128,128,0.33)"></div>
<div class="a" style="left:0;top:394.75px;width:875px;height:1.5px;background:rgba(128,128,128,0.33)"></div>
<div class="a" style="left:0;top:450.25px;width:875px;height:1.5px;background:rgba(128,128,128,0.33)"></div>
<div class="a" style="left:0;top:505.75px;width:875px;height:1.5px;background:rgba(128,128,128,0.33)"></div>
<div class="a" style="left:427px;top:148px;width:460px;height:1px;background:#d2d2d2"></div>
<div class="a" style="left:427px;top:339px;width:460px;height:1px;background:#d2d2d2"></div>
<div class="a" style="left:427px;top:148px;width:1px;height:192px;background:#d2d2d2"></div>
<div class="a" style="left:417px;top:333px;width:22px;height:13px;background:rgba(170,242,255,0.88)"></div>
<div class="a" style="left:420px;top:336px;width:15px;height:7px;border:1px solid rgba(240,253,255,0.9);border-radius:1.5px"></div>
<div class="a" style="left:2px;top:2px;width:43px;height:147px;background:#171717;border-radius:4px"></div>
<div class="a" style="left:16px;top:7px;width:16px;height:1px;background:#8a8a8a"></div>
<div class="a" style="left:16px;top:11px;width:16px;height:1px;background:#8a8a8a"></div>
<div class="a" style="left:5px;top:20px;width:37px;height:20px;background:#474747;border-radius:3px 3px 0 0"></div>
<div class="a" style="left:5px;top:41px;width:37px;height:20px;background:#3a5677;"></div>
<div class="a" style="left:5px;top:62px;width:37px;height:20px;background:#474747;"></div>
<div class="a" style="left:5px;top:83px;width:37px;height:20px;background:#474747;"></div>
<div class="a" style="left:5px;top:104px;width:37px;height:20px;background:#474747;"></div>
<div class="a" style="left:5px;top:125px;width:37px;height:20px;background:#474747;border-radius:0 0 3px 3px"></div>
<svg style="left:16px;top:22px" width="15" height="16" viewBox="0 0 15 16"><g stroke="#b8b8b8" stroke-linecap="round" fill="none"><path d="M5.4 2.2V9M8.3 1V9M11.1 1.8V9" stroke-width="1.9"/><path d="M13.6 4V10" stroke-width="1.7"/><path d="M1.6 5.8L4 10.5" stroke-width="1.8"/></g><path d="M3.6 8.5H14.5L13.6 12.5Q12.8 15 10.5 15H6.2Q4.6 15 4 13.5Z" fill="#b8b8b8"/></svg>
<svg style="left:16px;top:43px" width="16" height="16" viewBox="0 0 16 16"><path d="M8 1V15M1 8H15" stroke="#c0c0c0" stroke-width="1"/><path d="M5.5 3.5L8 1L10.5 3.5M5.5 12.5L8 15L10.5 12.5M3.5 5.5L1 8L3.5 10.5M12.5 5.5L15 8L12.5 10.5" fill="none" stroke="#c0c0c0" stroke-width="1.2"/></svg>
<svg style="left:16px;top:64px" width="16" height="16" viewBox="0 0 16 16"><g fill="none" stroke="#c0c0c0" stroke-width="1.1"><path d="M8 1.3A6.7 6.7 0 0 0 5.4 14.2"/><path d="M11.6 2.3A6.7 6.7 0 0 1 8 14.7"/><path d="M14.3 1.3H10.3V4.5"/><path d="M1.5 14.5H5.4V10.7"/></g></svg>
<svg style="left:17px;top:85px" width="14" height="15" viewBox="0 0 14 15"><rect x="0.5" y="0.5" width="13" height="13" fill="none" stroke="#c0c0c0" stroke-width="1"/><rect x="0.5" y="8.5" width="5" height="5" fill="none" stroke="#c0c0c0" stroke-width="1"/><path d="M6 8L11 3M7.5 3H11V6.5" fill="none" stroke="#c0c0c0" stroke-width="1"/></svg>
<svg style="left:17px;top:106px" width="14" height="14" viewBox="0 0 14 14"><rect x="0" y="0" width="3" height="3" fill="#c0c0c0"/><rect x="11" y="0" width="3" height="3" fill="#c0c0c0"/><rect x="0" y="11" width="3" height="3" fill="#c0c0c0"/><rect x="11" y="11" width="3" height="3" fill="#c0c0c0"/><path d="M4 1.5H10M4 12.5H10M1.5 4V10M12.5 4V10" stroke="#c0c0c0" stroke-width="1"/></svg>
<svg style="left:16px;top:127px" width="16" height="16" viewBox="0 0 16 16"><circle cx="8" cy="8" r="5.8" fill="none" stroke="#c0c0c0" stroke-width="1"/><path d="M8 3.5V12.5M3.5 8H12.5" stroke="#c0c0c0" stroke-width="1.6"/><path d="M0.5 15.5L3.5 15.5L0.5 12.5ZM15.5 0.5L12.5 0.5L15.5 3.5Z" fill="#c0c0c0"/></svg>
</div>
<div class="a" style="left:877px;top:73px;width:611px;height:19px;background:#1f1f1f;border-radius:4px 4px 0 0"></div>
<div class="a" style="left:877px;top:73px;width:96px;height:19px;background:#2e2e2e;border-radius:4px 4px 0 0"></div>
<svg style="left:885px;top:78px;" width="11" height="10" viewBox="0 0 11 10"><path d="M3.5 1H11M3.5 4H11M5.5 7H11M5.5 10H11" stroke="#b2b2b2" stroke-width="1.1"/><path d="M1 0V2M0 1H2" stroke="#b2b2b2" stroke-width="0.9"/><path d="M2 3V9.5M2 6.5H4M2 9.5H4" stroke="#b2b2b2" stroke-width="0.8"/></svg>
<div class="t" style="left:901px;top:77px;font-size:12.6px;color:#b2b2b2;">Hierarchy</div>
<svg style="left:1453px;top:77px;" width="9" height="10" viewBox="0 0 9 10"><path d="M7.5 5.6V3.2A2.6 2.6 0 0 0 2.3 3" fill="none" stroke="#b0b0b0" stroke-width="1.1"/><rect x="0.6" y="5.6" width="7.8" height="4" rx="0.6" fill="none" stroke="#b0b0b0" stroke-width="1.1"/></svg>
<svg style="left:1473px;top:77px;" width="3" height="11" viewBox="0 0 3 11"><circle cx="1.5" cy="1.5" r="1.3" fill="#b0b0b0"/><circle cx="1.5" cy="5.5" r="1.3" fill="#b0b0b0"/><circle cx="1.5" cy="9.5" r="1.3" fill="#b0b0b0"/></svg>
<div class="a" style="left:877px;top:92px;width:611px;height:20px;background:#2f2f2f;"></div>
<svg style="left:884px;top:96px;" width="12" height="12" viewBox="0 0 12 12"><path d="M6 0V12M0 6H12" stroke="#c0c0c0" stroke-width="1.4"/></svg>
<svg style="left:900px;top:100px;" width="8" height="5" viewBox="0 0 8 5"><path d="M0 0H8L4.0 5Z" fill="#b0b0b0"/></svg>
<div class="a" style="left:1159px;top:94px;width:326px;height:16px;background:#1f1f1f;border-radius:3px;border:1px solid #262626"></div>
<svg style="left:1164px;top:98px;" width="10" height="9" viewBox="0 0 10 9"><circle cx="3.2" cy="3.2" r="2.4" fill="none" stroke="#9a9a9a" stroke-width="1.1"/><path d="M5 5L7.5 7.8" stroke="#9a9a9a" stroke-width="1.3"/><path d="M7 2.5H10L8.5 4.2Z" fill="#9a9a9a"/></svg>
<div class="t" style="left:1178px;top:97px;font-size:12px;color:#6a6a6a;">All</div>
<div class="a" style="left:1467px;top:95px;width:17px;height:14px;background:#262626;border-radius:0 3px 3px 0"></div>
<svg style="left:1469px;top:96px;" width="13" height="12" viewBox="0 0 13 12"><rect x="0.5" y="6.5" width="4.5" height="4.5" fill="none" stroke="#a8a8a8" stroke-width="1"/><path d="M3 6.5V1H11.5V9.5H5" fill="none" stroke="#a8a8a8" stroke-width="1"/><path d="M5.5 6L9.5 2.5M6.5 2.5H9.5V5.5" fill="none" stroke="#a8a8a8" stroke-width="1"/></svg>
<div class="a" style="left:877px;top:112px;width:611px;height:16px;background:#222222;"></div>
<svg style="left:912px;top:116px;" width="7" height="9" viewBox="0 0 7 9"><path d="M0 0L7 4.5L0 9Z" fill="#5e5e5e"/></svg>
<svg style="left:925px;top:114px;" width="12" height="14" viewBox="0 0 12 14"><g fill="none" stroke="#d4d4d4" stroke-width="2.1"><path d="M4.6 0.8L0.9 3.2V9.2M7.4 0.8L11.1 3.2V9.2M2.8 5.8L6 7.8L9.2 5.8M6 7.8V12.6M1.8 10.8L6 13.3L10.2 10.8"/></g></svg>
<div class="t" style="left:941px;top:114.4px;font-size:13.4px;color:#c4c4c4;font-weight:bold">Character</div>
<div class="a" style="left:877px;top:128px;width:611px;height:1px;background:#303030;"></div>
<svg style="left:1474px;top:116px;" width="3" height="11" viewBox="0 0 3 11"><circle cx="1.5" cy="1.5" r="1.3" fill="#b0b0b0"/><circle cx="1.5" cy="5.5" r="1.3" fill="#b0b0b0"/><circle cx="1.5" cy="9.5" r="1.3" fill="#b0b0b0"/></svg>
<div class="a" style="left:877px;top:128px;width:611px;height:504px;background:#2e2e2e;"></div>
<div class="a" style="left:877px;top:128px;width:32px;height:504px;background:#272727;"></div>
<div class="a" style="left:1490px;top:73px;width:430px;height:19px;background:#1f1f1f;border-radius:4px 4px 0 0"></div>
<div class="a" style="left:1490px;top:73px;width:95px;height:19px;background:#2e2e2e;border-radius:4px 4px 0 0"></div>
<svg style="left:1499px;top:77px;" width="10" height="10" viewBox="0 0 10 10"><circle cx="5" cy="5" r="5" fill="#b2b2b2"/><rect x="4.2" y="4.2" width="1.6" height="4" fill="#2e2e2e"/><circle cx="5" cy="2.6" r="0.9" fill="#2e2e2e"/></svg>
<div class="t" style="left:1514px;top:77px;font-size:13px;color:#b2b2b2;">Inspector</div>
<svg style="left:1884px;top:77px;" width="9" height="10" viewBox="0 0 9 10"><path d="M7.5 5.6V3.2A2.6 2.6 0 0 0 2.3 3" fill="none" stroke="#b0b0b0" stroke-width="1.1"/><rect x="0.6" y="5.6" width="7.8" height="4" rx="0.6" fill="none" stroke="#b0b0b0" stroke-width="1.1"/></svg>
<svg style="left:1904px;top:77px;" width="3" height="11" viewBox="0 0 3 11"><circle cx="1.5" cy="1.5" r="1.3" fill="#b0b0b0"/><circle cx="1.5" cy="5.5" r="1.3" fill="#b0b0b0"/><circle cx="1.5" cy="9.5" r="1.3" fill="#b0b0b0"/></svg>
<div class="a" style="left:1490px;top:92px;width:430px;height:926px;background:#2d2d2d;"></div>
<div class="a" style="left:0px;top:634px;width:875px;height:19px;background:#1f1f1f;border-radius:4px 4px 0 0"></div>
<div class="a" style="left:88px;top:634px;width:74px;height:19px;background:#2e2e2e;border-radius:3px 3px 0 0"></div>
<div class="a" style="left:89px;top:634px;width:72px;height:2px;background:#2a5d8a;border-radius:2px 2px 0 0"></div>
<svg style="left:8px;top:638px;" width="10" height="11" viewBox="0 0 10 11"><rect x="0.5" y="0.5" width="9" height="10" rx="1" fill="#b2b2b2"/><path d="M2 3H8M2 5H6.5M2 7H8M2 9H6.5" stroke="#1f1f1f" stroke-width="0.9"/></svg>
<div class="t" style="left:23px;top:638px;font-size:12.5px;color:#b2b2b2;">Console</div>
<svg style="left:94px;top:639px;" width="14" height="8" viewBox="0 0 14 8"><rect x="0" y="0" width="14" height="8" rx="4" fill="#b2b2b2"/><path d="M2.5 4H5.5M4 2.5V5.5" stroke="#2b2b2b" stroke-width="1"/><circle cx="10" cy="3" r="0.9" fill="#2b2b2b"/><circle cx="11.2" cy="5" r="0.9" fill="#2b2b2b"/></svg>
<div class="t" style="left:112px;top:638px;font-size:12px;color:#b2b2b2;">Game</div>
<svg style="left:171px;top:637px;" width="13" height="13" viewBox="0 0 13 13"><circle cx="6.5" cy="6.5" r="6" fill="#b2b2b2"/><path d="M6.5 2.5V6.8H9.5" fill="none" stroke="#1f1f1f" stroke-width="1.3"/></svg>
<div class="t" style="left:188px;top:638px;font-size:12.5px;color:#b2b2b2;">Animation</div>
<svg style="left:861px;top:638px;" width="3" height="11" viewBox="0 0 3 11"><circle cx="1.5" cy="1.5" r="1.3" fill="#b0b0b0"/><circle cx="1.5" cy="5.5" r="1.3" fill="#b0b0b0"/><circle cx="1.5" cy="9.5" r="1.3" fill="#b0b0b0"/></svg>
<div class="a" style="left:0px;top:653px;width:875px;height:20px;background:#2e2e2e;"></div>
<div class="a" style="left:90px;top:653px;width:1px;height:20px;background:#1c1c1c;"></div>
<div class="a" style="left:176px;top:653px;width:1px;height:20px;background:#1c1c1c;"></div>
<div class="a" style="left:336px;top:653px;width:1px;height:20px;background:#1c1c1c;"></div>
<div class="a" style="left:577px;top:653px;width:1px;height:20px;background:#1c1c1c;"></div>
<div class="a" style="left:687px;top:653px;width:1px;height:20px;background:#1c1c1c;"></div>
<div class="a" style="left:713px;top:653px;width:1px;height:20px;background:#1c1c1c;"></div>
<div class="a" style="left:739px;top:653px;width:1px;height:20px;background:#1c1c1c;"></div>
<div class="a" style="left:765px;top:653px;width:1px;height:20px;background:#1c1c1c;"></div>
<div class="a" style="left:805px;top:653px;width:1px;height:20px;background:#1c1c1c;"></div>
<div class="a" style="left:857px;top:657px;width:1px;height:12px;background:#1c1c1c;"></div>
<div class="a" style="left:0px;top:673px;width:875px;height:1px;background:#141414;"></div>
<div class="t" style="left:4px;top:658px;font-size:12.2px;color:#a6a6a6;">Game</div>
<svg style="left:78px;top:661px;" width="8" height="5" viewBox="0 0 8 5"><path d="M0 0H8L4.0 5Z" fill="#a6a6a6"/></svg>
<div class="t" style="left:100px;top:658px;font-size:12.2px;color:#a6a6a6;">Display 1</div>
<svg style="left:165px;top:661px;" width="8" height="5" viewBox="0 0 8 5"><path d="M0 0H8L4.0 5Z" fill="#a6a6a6"/></svg>
<div class="t" style="left:180px;top:658px;font-size:12.8px;color:#a6a6a6;">Free Aspect</div>
<svg style="left:325px;top:661px;" width="8" height="5" viewBox="0 0 8 5"><path d="M0 0H8L4.0 5Z" fill="#a6a6a6"/></svg>
<div class="t" style="left:343px;top:658px;font-size:12.4px;color:#a6a6a6;">Scale</div>
<div class="a" style="left:390px;top:663px;width:140px;height:1.5px;background:#5a5a5a;"></div>
<div class="a" style="left:381px;top:659px;width:10px;height:10px;background:#8a8a8a;border-radius:50%"></div>
<div class="t" style="left:536px;top:658px;font-size:12.8px;color:#a6a6a6;">1x</div>
<div class="t" style="left:581px;top:658px;font-size:12.8px;color:#6c6c6c;">Play Focused</div>
<svg style="left:676px;top:661px;" width="8" height="5" viewBox="0 0 8 5"><path d="M0 0H8L4.0 5Z" fill="#6c6c6c"/></svg>
<svg style="left:692px;top:655px;" width="15" height="15" viewBox="0 0 15 15"><path d="M3.5 6A4 4.5 0 0 1 11.5 6V10A4 4 0 0 1 3.5 10Z" fill="#a6a6a6"/><circle cx="7.5" cy="3.3" r="2.4" fill="#a6a6a6"/><path d="M1 4L3.5 6.5M14 4L11.5 6.5M0.5 9H3.5M14.5 9H11.5M1 14L3.5 11.5M14 14L11.5 11.5" stroke="#a6a6a6" stroke-width="1.1"/><rect x="4.8" y="7.5" width="5.4" height="3.5" fill="none" stroke="#2b2b2b" stroke-width="1"/></svg>
<svg style="left:719px;top:656px;" width="13" height="12" viewBox="0 0 13 12"><path d="M0 3.5H2.5L6 0.5V11.5L2.5 8.5H0Z" fill="#a6a6a6"/><path d="M8 4A2.5 2.5 0 0 1 8 8M10 2.2A4.5 4.5 0 0 1 10 9.8" fill="none" stroke="#a6a6a6" stroke-width="1.1"/></svg>
<svg style="left:745px;top:658px;" width="14" height="10" viewBox="0 0 14 10"><rect x="0.5" y="0.5" width="13" height="9" fill="none" stroke="#a6a6a6" stroke-width="1"/><path d="M0.5 3.5H13.5M0.5 6.5H13.5M3.5 0.5V6.5M6.5 0.5V6.5M9.5 0.5V6.5M3.5 6.5V9.5M10.5 6.5V9.5" stroke="#a6a6a6" stroke-width="1"/></svg>
<div class="t" style="left:771px;top:658px;font-size:12.7px;color:#a6a6a6;">Stats</div>
<div class="t" style="left:809px;top:658px;font-size:12.4px;color:#a6a6a6;">Gizmos</div>
<svg style="left:862px;top:661px;" width="8" height="5" viewBox="0 0 8 5"><path d="M0 0H8L4.0 5Z" fill="#a6a6a6"/></svg>
<div class="a" style="left:0;top:674px;width:875px;height:344px;overflow:hidden;background:#b5f3fc">
<div class="a" style="left:0;top:0;width:875px;height:345px;background:radial-gradient(ellipse 200px 110px at 250px 345px, rgba(215,251,255,0.75), rgba(215,251,255,0) 100%),radial-gradient(ellipse 220px 150px at 90px 90px, rgba(210,250,255,0.6), rgba(210,250,255,0) 100%),radial-gradient(ellipse 200px 120px at 420px 60px, rgba(205,249,255,0.45), rgba(205,249,255,0) 100%),radial-gradient(ellipse 300px 200px at 870px 60px, rgba(150,236,252,0.65), rgba(150,236,252,0) 100%),radial-gradient(ellipse 250px 150px at 860px 320px, rgba(160,238,252,0.5), rgba(160,238,252,0) 100%),radial-gradient(ellipse 200px 120px at 520px 230px, rgba(175,241,252,0.4), rgba(175,241,252,0) 100%)"></div>
<svg style="left:168px;top:115px" width="149" height="159.5" viewBox="0 0 15 16" preserveAspectRatio="none" shape-rendering="crispEdges"><rect x="1" y="0" width="1.02" height="1.02" fill="#181818"/><rect x="2" y="0" width="1.02" height="1.02" fill="#181818"/><rect x="3" y="0" width="1.02" height="1.02" fill="#181818"/><rect x="4" y="0" width="1.02" height="1.02" fill="#181818"/><rect x="5" y="0" width="1.02" height="1.02" fill="#181818"/><rect x="6" y="0" width="1.02" height="1.02" fill="#181818"/><rect x="7" y="0" width="1.02" height="1.02" fill="#181818"/><rect x="8" y="0" width="1.02" height="1.02" fill="#181818"/><rect x="9" y="0" width="1.02" height="1.02" fill="#181818"/><rect x="10" y="0" width="1.02" height="1.02" fill="#181818"/><rect x="11" y="0" width="1.02" height="1.02" fill="#181818"/><rect x="12" y="0" width="1.02" height="1.02" fill="#181818"/><rect x="13" y="0" width="1.02" height="1.02" fill="#181818"/><rect x="0" y="1" width="1.02" height="1.02" fill="#181818"/><rect x="1" y="1" width="1.02" height="1.02" fill="#181818"/><rect x="2" y="1" width="1.02" height="1.02" fill="#41b4f6"/><rect x="3" y="1" width="1.02" height="1.02" fill="#41b4f6"/><rect x="4" y="1" width="1.02" height="1.02" fill="#41b4f6"/><rect x="5" y="1" width="1.02" height="1.02" fill="#41b4f6"/><rect x="6" y="1" width="1.02" height="1.02" fill="#41b4f6"/><rect x="7" y="1" width="1.02" height="1.02" fill="#41b4f6"/><rect x="8" y="1" width="1.02" height="1.02" fill="#38a5e7"/><rect x="9" y="1" width="1.02" height="1.02" fill="#38a5e7"/><rect x="10" y="1" width="1.02" height="1.02" fill="#38a5e7"/><rect x="11" y="1" width="1.02" height="1.02" fill="#38a5e7"/><rect x="12" y="1" width="1.02" height="1.02" fill="#38a5e7"/><rect x="13" y="1" width="1.02" height="1.02" fill="#181818"/><rect x="14" y="1" width="1.02" height="1.02" fill="#181818"/><rect x="0" y="2" width="1.02" height="1.02" fill="#181818"/><rect x="1" y="2" width="1.02" height="1.02" fill="#41b4f6"/><rect x="2" y="2" width="1.02" height="1.02" fill="#41b4f6"/><rect x="3" y="2" width="1.02" height="1.02" fill="#41b4f6"/><rect x="4" y="2" width="1.02" height="1.02" fill="#41b4f6"/><rect x="5" y="2" width="1.02" height="1.02" fill="#41b4f6"/><rect x="6" y="2" width="1.02" height="1.02" fill="#41b4f6"/><rect x="7" y="2" width="1.02" height="1.02" fill="#38a5e7"/><rect x="8" y="2" width="1.02" height="1.02" fill="#38a5e7"/><rect x="9" y="2" width="1.02" height="1.02" fill="#38a5e7"/><rect x="10" y="2" width="1.02" height="1.02" fill="#38a5e7"/><rect x="11" y="2" width="1.02" height="1.02" fill="#38a5e7"/><rect x="12" y="2" width="1.02" height="1.02" fill="#2e97d9"/><rect x="13" y="2" width="1.02" height="1.02" fill="#2e97d9"/><rect x="14" y="2" width="1.02" height="1.02" fill="#181818"/><rect x="0" y="3" width="1.02" height="1.02" fill="#181818"/><rect x="1" y="3" width="1.02" height="1.02" fill="#41b4f6"/><rect x="2" y="3" width="1.02" height="1.02" fill="#41b4f6"/><rect x="3" y="3" width="1.02" height="1.02" fill="#41b4f6"/><rect x="4" y="3" width="1.02" height="1.02" fill="#1d4d6d"/><rect x="5" y="3" width="1.02" height="1.02" fill="#41b4f6"/><rect x="6" y="3" width="1.02" height="1.02" fill="#41b4f6"/><rect x="7" y="3" width="1.02" height="1.02" fill="#38a5e7"/><rect x="8" y="3" width="1.02" height="1.02" fill="#38a5e7"/><rect x="9" y="3" width="1.02" height="1.02" fill="#38a5e7"/><rect x="10" y="3" width="1.02" height="1.02" fill="#1d4d6d"/><rect x="11" y="3" width="1.02" height="1.02" fill="#38a5e7"/><rect x="12" y="3" width="1.02" height="1.02" fill="#2e97d9"/><rect x="13" y="3" width="1.02" height="1.02" fill="#2e97d9"/><rect x="14" y="3" width="1.02" height="1.02" fill="#181818"/><rect x="0" y="4" width="1.02" height="1.02" fill="#181818"/><rect x="1" y="4" width="1.02" height="1.02" fill="#41b4f6"/><rect x="2" y="4" width="1.02" height="1.02" fill="#41b4f6"/><rect x="3" y="4" width="1.02" height="1.02" fill="#1d4d6d"/><rect x="4" y="4" width="1.02" height="1.02" fill="#41b4f6"/><rect x="5" y="4" width="1.02" height="1.02" fill="#1d4d6d"/><rect x="6" y="4" width="1.02" height="1.02" fill="#38a5e7"/><rect x="7" y="4" width="1.02" height="1.02" fill="#38a5e7"/><rect x="8" y="4" width="1.02" height="1.02" fill="#38a5e7"/><rect x="9" y="4" width="1.02" height="1.02" fill="#1d4d6d"/><rect x="10" y="4" width="1.02" height="1.02" fill="#38a5e7"/><rect x="11" y="4" width="1.02" height="1.02" fill="#1d4d6d"/><rect x="12" y="4" width="1.02" height="1.02" fill="#2e97d9"/><rect x="13" y="4" width="1.02" height="1.02" fill="#2e97d9"/><rect x="14" y="4" width="1.02" height="1.02" fill="#181818"/><rect x="0" y="5" width="1.02" height="1.02" fill="#181818"/><rect x="1" y="5" width="1.02" height="1.02" fill="#41b4f6"/><rect x="2" y="5" width="1.02" height="1.02" fill="#41b4f6"/><rect x="3" y="5" width="1.02" height="1.02" fill="#41b4f6"/><rect x="4" y="5" width="1.02" height="1.02" fill="#41b4f6"/><rect x="5" y="5" width="1.02" height="1.02" fill="#38a5e7"/><rect x="6" y="5" width="1.02" height="1.02" fill="#38a5e7"/><rect x="7" y="5" width="1.02" height="1.02" fill="#38a5e7"/><rect x="8" y="5" width="1.02" height="1.02" fill="#38a5e7"/><rect x="9" y="5" width="1.02" height="1.02" fill="#38a5e7"/><rect x="10" y="5" width="1.02" height="1.02" fill="#2e97d9"/><rect x="11" y="5" width="1.02" height="1.02" fill="#2e97d9"/><rect x="12" y="5" width="1.02" height="1.02" fill="#2e97d9"/><rect x="13" y="5" width="1.02" height="1.02" fill="#2e97d9"/><rect x="14" y="5" width="1.02" height="1.02" fill="#181818"/><rect x="0" y="6" width="1.02" height="1.02" fill="#181818"/><rect x="1" y="6" width="1.02" height="1.02" fill="#41b4f6"/><rect x="2" y="6" width="1.02" height="1.02" fill="#41b4f6"/><rect x="3" y="6" width="1.02" height="1.02" fill="#41b4f6"/><rect x="4" y="6" width="1.02" height="1.02" fill="#38a5e7"/><rect x="5" y="6" width="1.02" height="1.02" fill="#38a5e7"/><rect x="6" y="6" width="1.02" height="1.02" fill="#38a5e7"/><rect x="7" y="6" width="1.02" height="1.02" fill="#38a5e7"/><rect x="8" y="6" width="1.02" height="1.02" fill="#38a5e7"/><rect x="9" y="6" width="1.02" height="1.02" fill="#2e97d9"/><rect x="10" y="6" width="1.02" height="1.02" fill="#2e97d9"/><rect x="11" y="6" width="1.02" height="1.02" fill="#2e97d9"/><rect x="12" y="6" width="1.02" height="1.02" fill="#2e97d9"/><rect x="13" y="6" width="1.02" height="1.02" fill="#2e97d9"/><rect x="14" y="6" width="1.02" height="1.02" fill="#181818"/><rect x="0" y="7" width="1.02" height="1.02" fill="#181818"/><rect x="1" y="7" width="1.02" height="1.02" fill="#41b4f6"/><rect x="2" y="7" width="1.02" height="1.02" fill="#41b4f6"/><rect x="3" y="7" width="1.02" height="1.02" fill="#38a5e7"/><rect x="4" y="7" width="1.02" height="1.02" fill="#38a5e7"/><rect x="5" y="7" width="1.02" height="1.02" fill="#1d4d6d"/><rect x="6" y="7" width="1.02" height="1.02" fill="#d6d6d6"/><rect x="7" y="7" width="1.02" height="1.02" fill="#e2e2e2"/><rect x="8" y="7" width="1.02" height="1.02" fill="#d6d6d6"/><rect x="9" y="7" width="1.02" height="1.02" fill="#1d4d6d"/><rect x="10" y="7" width="1.02" height="1.02" fill="#2e97d9"/><rect x="11" y="7" width="1.02" height="1.02" fill="#2e97d9"/><rect x="12" y="7" width="1.02" height="1.02" fill="#2e97d9"/><rect x="13" y="7" width="1.02" height="1.02" fill="#2a86c1"/><rect x="14" y="7" width="1.02" height="1.02" fill="#181818"/><rect x="0" y="8" width="1.02" height="1.02" fill="#181818"/><rect x="1" y="8" width="1.02" height="1.02" fill="#41b4f6"/><rect x="2" y="8" width="1.02" height="1.02" fill="#41b4f6"/><rect x="3" y="8" width="1.02" height="1.02" fill="#38a5e7"/><rect x="4" y="8" width="1.02" height="1.02" fill="#38a5e7"/><rect x="5" y="8" width="1.02" height="1.02" fill="#38a5e7"/><rect x="6" y="8" width="1.02" height="1.02" fill="#1d4d6d"/><rect x="7" y="8" width="1.02" height="1.02" fill="#1d4d6d"/><rect x="8" y="8" width="1.02" height="1.02" fill="#1d4d6d"/><rect x="9" y="8" width="1.02" height="1.02" fill="#2e97d9"/><rect x="10" y="8" width="1.02" height="1.02" fill="#2e97d9"/><rect x="11" y="8" width="1.02" height="1.02" fill="#2e97d9"/><rect x="12" y="8" width="1.02" height="1.02" fill="#2e97d9"/><rect x="13" y="8" width="1.02" height="1.02" fill="#2a86c1"/><rect x="14" y="8" width="1.02" height="1.02" fill="#181818"/><rect x="0" y="9" width="1.02" height="1.02" fill="#181818"/><rect x="1" y="9" width="1.02" height="1.02" fill="#41b4f6"/><rect x="2" y="9" width="1.02" height="1.02" fill="#41b4f6"/><rect x="3" y="9" width="1.02" height="1.02" fill="#38a5e7"/><rect x="4" y="9" width="1.02" height="1.02" fill="#38a5e7"/><rect x="5" y="9" width="1.02" height="1.02" fill="#38a5e7"/><rect x="6" y="9" width="1.02" height="1.02" fill="#2e97d9"/><rect x="7" y="9" width="1.02" height="1.02" fill="#2e97d9"/><rect x="8" y="9" width="1.02" height="1.02" fill="#2e97d9"/><rect x="9" y="9" width="1.02" height="1.02" fill="#2e97d9"/><rect x="10" y="9" width="1.02" height="1.02" fill="#2e97d9"/><rect x="11" y="9" width="1.02" height="1.02" fill="#2e97d9"/><rect x="12" y="9" width="1.02" height="1.02" fill="#2a86c1"/><rect x="13" y="9" width="1.02" height="1.02" fill="#2a86c1"/><rect x="14" y="9" width="1.02" height="1.02" fill="#181818"/><rect x="0" y="10" width="1.02" height="1.02" fill="#181818"/><rect x="1" y="10" width="1.02" height="1.02" fill="#41b4f6"/><rect x="2" y="10" width="1.02" height="1.02" fill="#41b4f6"/><rect x="3" y="10" width="1.02" height="1.02" fill="#38a5e7"/><rect x="4" y="10" width="1.02" height="1.02" fill="#38a5e7"/><rect x="5" y="10" width="1.02" height="1.02" fill="#2e97d9"/><rect x="6" y="10" width="1.02" height="1.02" fill="#2e97d9"/><rect x="7" y="10" width="1.02" height="1.02" fill="#2e97d9"/><rect x="8" y="10" width="1.02" height="1.02" fill="#2e97d9"/><rect x="9" y="10" width="1.02" height="1.02" fill="#2e97d9"/><rect x="10" y="10" width="1.02" height="1.02" fill="#2e97d9"/><rect x="11" y="10" width="1.02" height="1.02" fill="#2e97d9"/><rect x="12" y="10" width="1.02" height="1.02" fill="#2a86c1"/><rect x="13" y="10" width="1.02" height="1.02" fill="#2a86c1"/><rect x="14" y="10" width="1.02" height="1.02" fill="#181818"/><rect x="0" y="11" width="1.02" height="1.02" fill="#181818"/><rect x="1" y="11" width="1.02" height="1.02" fill="#41b4f6"/><rect x="2" y="11" width="1.02" height="1.02" fill="#41b4f6"/><rect x="3" y="11" width="1.02" height="1.02" fill="#38a5e7"/><rect x="4" y="11" width="1.02" height="1.02" fill="#38a5e7"/><rect x="5" y="11" width="1.02" height="1.02" fill="#2e97d9"/><rect x="6" y="11" width="1.02" height="1.02" fill="#2e97d9"/><rect x="7" y="11" width="1.02" height="1.02" fill="#2e97d9"/><rect x="8" y="11" width="1.02" height="1.02" fill="#2e97d9"/><rect x="9" y="11" width="1.02" height="1.02" fill="#2e97d9"/><rect x="10" y="11" width="1.02" height="1.02" fill="#2e97d9"/><rect x="11" y="11" width="1.02" height="1.02" fill="#2e97d9"/><rect x="12" y="11" width="1.02" height="1.02" fill="#2a86c1"/><rect x="13" y="11" width="1.02" height="1.02" fill="#2a86c1"/><rect x="14" y="11" width="1.02" height="1.02" fill="#181818"/><rect x="0" y="12" width="1.02" height="1.02" fill="#181818"/><rect x="1" y="12" width="1.02" height="1.02" fill="#41b4f6"/><rect x="2" y="12" width="1.02" height="1.02" fill="#41b4f6"/><rect x="3" y="12" width="1.02" height="1.02" fill="#38a5e7"/><rect x="4" y="12" width="1.02" height="1.02" fill="#2e97d9"/><rect x="5" y="12" width="1.02" height="1.02" fill="#181818"/><rect x="6" y="12" width="1.02" height="1.02" fill="#181818"/><rect x="7" y="12" width="1.02" height="1.02" fill="#181818"/><rect x="8" y="12" width="1.02" height="1.02" fill="#181818"/><rect x="9" y="12" width="1.02" height="1.02" fill="#181818"/><rect x="10" y="12" width="1.02" height="1.02" fill="#2e97d9"/><rect x="11" y="12" width="1.02" height="1.02" fill="#2a86c1"/><rect x="12" y="12" width="1.02" height="1.02" fill="#2a86c1"/><rect x="13" y="12" width="1.02" height="1.02" fill="#2a86c1"/><rect x="14" y="12" width="1.02" height="1.02" fill="#181818"/><rect x="0" y="13" width="1.02" height="1.02" fill="#181818"/><rect x="1" y="13" width="1.02" height="1.02" fill="#41b4f6"/><rect x="2" y="13" width="1.02" height="1.02" fill="#38a5e7"/><rect x="3" y="13" width="1.02" height="1.02" fill="#38a5e7"/><rect x="4" y="13" width="1.02" height="1.02" fill="#2e97d9"/><rect x="5" y="13" width="1.02" height="1.02" fill="#2a86c1"/><rect x="6" y="13" width="1.02" height="1.02" fill="#181818"/><rect x="8" y="13" width="1.02" height="1.02" fill="#181818"/><rect x="9" y="13" width="1.02" height="1.02" fill="#2a86c1"/><rect x="10" y="13" width="1.02" height="1.02" fill="#2a86c1"/><rect x="11" y="13" width="1.02" height="1.02" fill="#2a86c1"/><rect x="12" y="13" width="1.02" height="1.02" fill="#2a86c1"/><rect x="13" y="13" width="1.02" height="1.02" fill="#2a86c1"/><rect x="14" y="13" width="1.02" height="1.02" fill="#181818"/><rect x="0" y="14" width="1.02" height="1.02" fill="#181818"/><rect x="1" y="14" width="1.02" height="1.02" fill="#38a5e7"/><rect x="2" y="14" width="1.02" height="1.02" fill="#2a86c1"/><rect x="3" y="14" width="1.02" height="1.02" fill="#2a86c1"/><rect x="4" y="14" width="1.02" height="1.02" fill="#2a86c1"/><rect x="5" y="14" width="1.02" height="1.02" fill="#2a86c1"/><rect x="6" y="14" width="1.02" height="1.02" fill="#181818"/><rect x="8" y="14" width="1.02" height="1.02" fill="#181818"/><rect x="9" y="14" width="1.02" height="1.02" fill="#2a86c1"/><rect x="10" y="14" width="1.02" height="1.02" fill="#2a86c1"/><rect x="11" y="14" width="1.02" height="1.02" fill="#2a86c1"/><rect x="12" y="14" width="1.02" height="1.02" fill="#2a86c1"/><rect x="13" y="14" width="1.02" height="1.02" fill="#2a86c1"/><rect x="14" y="14" width="1.02" height="1.02" fill="#181818"/><rect x="1" y="15" width="1.02" height="1.02" fill="#181818"/><rect x="2" y="15" width="1.02" height="1.02" fill="#181818"/><rect x="3" y="15" width="1.02" height="1.02" fill="#181818"/><rect x="4" y="15" width="1.02" height="1.02" fill="#181818"/><rect x="5" y="15" width="1.02" height="1.02" fill="#181818"/><rect x="9" y="15" width="1.02" height="1.02" fill="#181818"/><rect x="10" y="15" width="1.02" height="1.02" fill="#181818"/><rect x="11" y="15" width="1.02" height="1.02" fill="#181818"/><rect x="12" y="15" width="1.02" height="1.02" fill="#181818"/><rect x="13" y="15" width="1.02" height="1.02" fill="#181818"/></svg>
<div class="t" style="left:168px;top:206.3px;width:149px;text-align:center;font-size:23.5px;color:#fff">Clica</div>
<svg style="left:566px;top:115px" width="149" height="159.5" viewBox="0 0 15 16" preserveAspectRatio="none" shape-rendering="crispEdges"><rect x="1" y="0" width="1.02" height="1.02" fill="#181818"/><rect x="2" y="0" width="1.02" height="1.02" fill="#181818"/><rect x="3" y="0" width="1.02" height="1.02" fill="#181818"/><rect x="4" y="0" width="1.02" height="1.02" fill="#181818"/><rect x="5" y="0" width="1.02" height="1.02" fill="#181818"/><rect x="6" y="0" width="1.02" height="1.02" fill="#181818"/><rect x="7" y="0" width="1.02" height="1.02" fill="#181818"/><rect x="8" y="0" width="1.02" height="1.02" fill="#181818"/><rect x="9" y="0" width="1.02" height="1.02" fill="#181818"/><rect x="10" y="0" width="1.02" height="1.02" fill="#181818"/><rect x="11" y="0" width="1.02" height="1.02" fill="#181818"/><rect x="12" y="0" width="1.02" height="1.02" fill="#181818"/><rect x="13" y="0" width="1.02" height="1.02" fill="#181818"/><rect x="0" y="1" width="1.02" height="1.02" fill="#181818"/><rect x="1" y="1" width="1.02" height="1.02" fill="#181818"/><rect x="2" y="1" width="1.02" height="1.02" fill="#f643c8"/><rect x="3" y="1" width="1.02" height="1.02" fill="#f643c8"/><rect x="4" y="1" width="1.02" height="1.02" fill="#f643c8"/><rect x="5" y="1" width="1.02" height="1.02" fill="#f643c8"/><rect x="6" y="1" width="1.02" height="1.02" fill="#f643c8"/><rect x="7" y="1" width="1.02" height="1.02" fill="#f643c8"/><rect x="8" y="1" width="1.02" height="1.02" fill="#e738b9"/><rect x="9" y="1" width="1.02" height="1.02" fill="#e738b9"/><rect x="10" y="1" width="1.02" height="1.02" fill="#e738b9"/><rect x="11" y="1" width="1.02" height="1.02" fill="#e738b9"/><rect x="12" y="1" width="1.02" height="1.02" fill="#e738b9"/><rect x="13" y="1" width="1.02" height="1.02" fill="#181818"/><rect x="14" y="1" width="1.02" height="1.02" fill="#181818"/><rect x="0" y="2" width="1.02" height="1.02" fill="#181818"/><rect x="1" y="2" width="1.02" height="1.02" fill="#f643c8"/><rect x="2" y="2" width="1.02" height="1.02" fill="#f643c8"/><rect x="3" y="2" width="1.02" height="1.02" fill="#f643c8"/><rect x="4" y="2" width="1.02" height="1.02" fill="#f643c8"/><rect x="5" y="2" width="1.02" height="1.02" fill="#f643c8"/><rect x="6" y="2" width="1.02" height="1.02" fill="#f643c8"/><rect x="7" y="2" width="1.02" height="1.02" fill="#e738b9"/><rect x="8" y="2" width="1.02" height="1.02" fill="#e738b9"/><rect x="9" y="2" width="1.02" height="1.02" fill="#e738b9"/><rect x="10" y="2" width="1.02" height="1.02" fill="#e738b9"/><rect x="11" y="2" width="1.02" height="1.02" fill="#e738b9"/><rect x="12" y="2" width="1.02" height="1.02" fill="#d82ea9"/><rect x="13" y="2" width="1.02" height="1.02" fill="#d82ea9"/><rect x="14" y="2" width="1.02" height="1.02" fill="#181818"/><rect x="0" y="3" width="1.02" height="1.02" fill="#181818"/><rect x="1" y="3" width="1.02" height="1.02" fill="#f643c8"/><rect x="2" y="3" width="1.02" height="1.02" fill="#f643c8"/><rect x="3" y="3" width="1.02" height="1.02" fill="#f643c8"/><rect x="4" y="3" width="1.02" height="1.02" fill="#6b1b56"/><rect x="5" y="3" width="1.02" height="1.02" fill="#f643c8"/><rect x="6" y="3" width="1.02" height="1.02" fill="#f643c8"/><rect x="7" y="3" width="1.02" height="1.02" fill="#e738b9"/><rect x="8" y="3" width="1.02" height="1.02" fill="#e738b9"/><rect x="9" y="3" width="1.02" height="1.02" fill="#e738b9"/><rect x="10" y="3" width="1.02" height="1.02" fill="#6b1b56"/><rect x="11" y="3" width="1.02" height="1.02" fill="#e738b9"/><rect x="12" y="3" width="1.02" height="1.02" fill="#d82ea9"/><rect x="13" y="3" width="1.02" height="1.02" fill="#d82ea9"/><rect x="14" y="3" width="1.02" height="1.02" fill="#181818"/><rect x="0" y="4" width="1.02" height="1.02" fill="#181818"/><rect x="1" y="4" width="1.02" height="1.02" fill="#f643c8"/><rect x="2" y="4" width="1.02" height="1.02" fill="#f643c8"/><rect x="3" y="4" width="1.02" height="1.02" fill="#6b1b56"/><rect x="4" y="4" width="1.02" height="1.02" fill="#f643c8"/><rect x="5" y="4" width="1.02" height="1.02" fill="#6b1b56"/><rect x="6" y="4" width="1.02" height="1.02" fill="#e738b9"/><rect x="7" y="4" width="1.02" height="1.02" fill="#e738b9"/><rect x="8" y="4" width="1.02" height="1.02" fill="#e738b9"/><rect x="9" y="4" width="1.02" height="1.02" fill="#6b1b56"/><rect x="10" y="4" width="1.02" height="1.02" fill="#e738b9"/><rect x="11" y="4" width="1.02" height="1.02" fill="#6b1b56"/><rect x="12" y="4" width="1.02" height="1.02" fill="#d82ea9"/><rect x="13" y="4" width="1.02" height="1.02" fill="#d82ea9"/><rect x="14" y="4" width="1.02" height="1.02" fill="#181818"/><rect x="0" y="5" width="1.02" height="1.02" fill="#181818"/><rect x="1" y="5" width="1.02" height="1.02" fill="#f643c8"/><rect x="2" y="5" width="1.02" height="1.02" fill="#f643c8"/><rect x="3" y="5" width="1.02" height="1.02" fill="#f643c8"/><rect x="4" y="5" width="1.02" height="1.02" fill="#f643c8"/><rect x="5" y="5" width="1.02" height="1.02" fill="#e738b9"/><rect x="6" y="5" width="1.02" height="1.02" fill="#e738b9"/><rect x="7" y="5" width="1.02" height="1.02" fill="#e738b9"/><rect x="8" y="5" width="1.02" height="1.02" fill="#e738b9"/><rect x="9" y="5" width="1.02" height="1.02" fill="#e738b9"/><rect x="10" y="5" width="1.02" height="1.02" fill="#d82ea9"/><rect x="11" y="5" width="1.02" height="1.02" fill="#d82ea9"/><rect x="12" y="5" width="1.02" height="1.02" fill="#d82ea9"/><rect x="13" y="5" width="1.02" height="1.02" fill="#d82ea9"/><rect x="14" y="5" width="1.02" height="1.02" fill="#181818"/><rect x="0" y="6" width="1.02" height="1.02" fill="#181818"/><rect x="1" y="6" width="1.02" height="1.02" fill="#f643c8"/><rect x="2" y="6" width="1.02" height="1.02" fill="#f643c8"/><rect x="3" y="6" width="1.02" height="1.02" fill="#f643c8"/><rect x="4" y="6" width="1.02" height="1.02" fill="#e738b9"/><rect x="5" y="6" width="1.02" height="1.02" fill="#e738b9"/><rect x="6" y="6" width="1.02" height="1.02" fill="#e738b9"/><rect x="7" y="6" width="1.02" height="1.02" fill="#e738b9"/><rect x="8" y="6" width="1.02" height="1.02" fill="#e738b9"/><rect x="9" y="6" width="1.02" height="1.02" fill="#d82ea9"/><rect x="10" y="6" width="1.02" height="1.02" fill="#d82ea9"/><rect x="11" y="6" width="1.02" height="1.02" fill="#d82ea9"/><rect x="12" y="6" width="1.02" height="1.02" fill="#d82ea9"/><rect x="13" y="6" width="1.02" height="1.02" fill="#d82ea9"/><rect x="14" y="6" width="1.02" height="1.02" fill="#181818"/><rect x="0" y="7" width="1.02" height="1.02" fill="#181818"/><rect x="1" y="7" width="1.02" height="1.02" fill="#f643c8"/><rect x="2" y="7" width="1.02" height="1.02" fill="#f643c8"/><rect x="3" y="7" width="1.02" height="1.02" fill="#e738b9"/><rect x="4" y="7" width="1.02" height="1.02" fill="#e738b9"/><rect x="5" y="7" width="1.02" height="1.02" fill="#6b1b56"/><rect x="6" y="7" width="1.02" height="1.02" fill="#d6d6d6"/><rect x="7" y="7" width="1.02" height="1.02" fill="#e2e2e2"/><rect x="8" y="7" width="1.02" height="1.02" fill="#d6d6d6"/><rect x="9" y="7" width="1.02" height="1.02" fill="#6b1b56"/><rect x="10" y="7" width="1.02" height="1.02" fill="#d82ea9"/><rect x="11" y="7" width="1.02" height="1.02" fill="#d82ea9"/><rect x="12" y="7" width="1.02" height="1.02" fill="#d82ea9"/><rect x="13" y="7" width="1.02" height="1.02" fill="#bb2591"/><rect x="14" y="7" width="1.02" height="1.02" fill="#181818"/><rect x="0" y="8" width="1.02" height="1.02" fill="#181818"/><rect x="1" y="8" width="1.02" height="1.02" fill="#f643c8"/><rect x="2" y="8" width="1.02" height="1.02" fill="#f643c8"/><rect x="3" y="8" width="1.02" height="1.02" fill="#e738b9"/><rect x="4" y="8" width="1.02" height="1.02" fill="#e738b9"/><rect x="5" y="8" width="1.02" height="1.02" fill="#e738b9"/><rect x="6" y="8" width="1.02" height="1.02" fill="#6b1b56"/><rect x="7" y="8" width="1.02" height="1.02" fill="#6b1b56"/><rect x="8" y="8" width="1.02" height="1.02" fill="#6b1b56"/><rect x="9" y="8" width="1.02" height="1.02" fill="#d82ea9"/><rect x="10" y="8" width="1.02" height="1.02" fill="#d82ea9"/><rect x="11" y="8" width="1.02" height="1.02" fill="#d82ea9"/><rect x="12" y="8" width="1.02" height="1.02" fill="#d82ea9"/><rect x="13" y="8" width="1.02" height="1.02" fill="#bb2591"/><rect x="14" y="8" width="1.02" height="1.02" fill="#181818"/><rect x="0" y="9" width="1.02" height="1.02" fill="#181818"/><rect x="1" y="9" width="1.02" height="1.02" fill="#f643c8"/><rect x="2" y="9" width="1.02" height="1.02" fill="#f643c8"/><rect x="3" y="9" width="1.02" height="1.02" fill="#e738b9"/><rect x="4" y="9" width="1.02" height="1.02" fill="#e738b9"/><rect x="5" y="9" width="1.02" height="1.02" fill="#e738b9"/><rect x="6" y="9" width="1.02" height="1.02" fill="#d82ea9"/><rect x="7" y="9" width="1.02" height="1.02" fill="#d82ea9"/><rect x="8" y="9" width="1.02" height="1.02" fill="#d82ea9"/><rect x="9" y="9" width="1.02" height="1.02" fill="#d82ea9"/><rect x="10" y="9" width="1.02" height="1.02" fill="#d82ea9"/><rect x="11" y="9" width="1.02" height="1.02" fill="#d82ea9"/><rect x="12" y="9" width="1.02" height="1.02" fill="#bb2591"/><rect x="13" y="9" width="1.02" height="1.02" fill="#bb2591"/><rect x="14" y="9" width="1.02" height="1.02" fill="#181818"/><rect x="0" y="10" width="1.02" height="1.02" fill="#181818"/><rect x="1" y="10" width="1.02" height="1.02" fill="#f643c8"/><rect x="2" y="10" width="1.02" height="1.02" fill="#f643c8"/><rect x="3" y="10" width="1.02" height="1.02" fill="#e738b9"/><rect x="4" y="10" width="1.02" height="1.02" fill="#e738b9"/><rect x="5" y="10" width="1.02" height="1.02" fill="#d82ea9"/><rect x="6" y="10" width="1.02" height="1.02" fill="#d82ea9"/><rect x="7" y="10" width="1.02" height="1.02" fill="#d82ea9"/><rect x="8" y="10" width="1.02" height="1.02" fill="#d82ea9"/><rect x="9" y="10" width="1.02" height="1.02" fill="#d82ea9"/><rect x="10" y="10" width="1.02" height="1.02" fill="#d82ea9"/><rect x="11" y="10" width="1.02" height="1.02" fill="#d82ea9"/><rect x="12" y="10" width="1.02" height="1.02" fill="#bb2591"/><rect x="13" y="10" width="1.02" height="1.02" fill="#bb2591"/><rect x="14" y="10" width="1.02" height="1.02" fill="#181818"/><rect x="0" y="11" width="1.02" height="1.02" fill="#181818"/><rect x="1" y="11" width="1.02" height="1.02" fill="#f643c8"/><rect x="2" y="11" width="1.02" height="1.02" fill="#f643c8"/><rect x="3" y="11" width="1.02" height="1.02" fill="#e738b9"/><rect x="4" y="11" width="1.02" height="1.02" fill="#e738b9"/><rect x="5" y="11" width="1.02" height="1.02" fill="#d82ea9"/><rect x="6" y="11" width="1.02" height="1.02" fill="#d82ea9"/><rect x="7" y="11" width="1.02" height="1.02" fill="#d82ea9"/><rect x="8" y="11" width="1.02" height="1.02" fill="#d82ea9"/><rect x="9" y="11" width="1.02" height="1.02" fill="#d82ea9"/><rect x="10" y="11" width="1.02" height="1.02" fill="#d82ea9"/><rect x="11" y="11" width="1.02" height="1.02" fill="#d82ea9"/><rect x="12" y="11" width="1.02" height="1.02" fill="#bb2591"/><rect x="13" y="11" width="1.02" height="1.02" fill="#bb2591"/><rect x="14" y="11" width="1.02" height="1.02" fill="#181818"/><rect x="0" y="12" width="1.02" height="1.02" fill="#181818"/><rect x="1" y="12" width="1.02" height="1.02" fill="#f643c8"/><rect x="2" y="12" width="1.02" height="1.02" fill="#f643c8"/><rect x="3" y="12" width="1.02" height="1.02" fill="#e738b9"/><rect x="4" y="12" width="1.02" height="1.02" fill="#d82ea9"/><rect x="5" y="12" width="1.02" height="1.02" fill="#181818"/><rect x="6" y="12" width="1.02" height="1.02" fill="#181818"/><rect x="7" y="12" width="1.02" height="1.02" fill="#181818"/><rect x="8" y="12" width="1.02" height="1.02" fill="#181818"/><rect x="9" y="12" width="1.02" height="1.02" fill="#181818"/><rect x="10" y="12" width="1.02" height="1.02" fill="#d82ea9"/><rect x="11" y="12" width="1.02" height="1.02" fill="#bb2591"/><rect x="12" y="12" width="1.02" height="1.02" fill="#bb2591"/><rect x="13" y="12" width="1.02" height="1.02" fill="#bb2591"/><rect x="14" y="12" width="1.02" height="1.02" fill="#181818"/><rect x="0" y="13" width="1.02" height="1.02" fill="#181818"/><rect x="1" y="13" width="1.02" height="1.02" fill="#f643c8"/><rect x="2" y="13" width="1.02" height="1.02" fill="#e738b9"/><rect x="3" y="13" width="1.02" height="1.02" fill="#e738b9"/><rect x="4" y="13" width="1.02" height="1.02" fill="#d82ea9"/><rect x="5" y="13" width="1.02" height="1.02" fill="#bb2591"/><rect x="6" y="13" width="1.02" height="1.02" fill="#181818"/><rect x="8" y="13" width="1.02" height="1.02" fill="#181818"/><rect x="9" y="13" width="1.02" height="1.02" fill="#bb2591"/><rect x="10" y="13" width="1.02" height="1.02" fill="#bb2591"/><rect x="11" y="13" width="1.02" height="1.02" fill="#bb2591"/><rect x="12" y="13" width="1.02" height="1.02" fill="#bb2591"/><rect x="13" y="13" width="1.02" height="1.02" fill="#bb2591"/><rect x="14" y="13" width="1.02" height="1.02" fill="#181818"/><rect x="0" y="14" width="1.02" height="1.02" fill="#181818"/><rect x="1" y="14" width="1.02" height="1.02" fill="#e738b9"/><rect x="2" y="14" width="1.02" height="1.02" fill="#bb2591"/><rect x="3" y="14" width="1.02" height="1.02" fill="#bb2591"/><rect x="4" y="14" width="1.02" height="1.02" fill="#bb2591"/><rect x="5" y="14" width="1.02" height="1.02" fill="#bb2591"/><rect x="6" y="14" width="1.02" height="1.02" fill="#181818"/><rect x="8" y="14" width="1.02" height="1.02" fill="#181818"/><rect x="9" y="14" width="1.02" height="1.02" fill="#bb2591"/><rect x="10" y="14" width="1.02" height="1.02" fill="#bb2591"/><rect x="11" y="14" width="1.02" height="1.02" fill="#bb2591"/><rect x="12" y="14" width="1.02" height="1.02" fill="#bb2591"/><rect x="13" y="14" width="1.02" height="1.02" fill="#bb2591"/><rect x="14" y="14" width="1.02" height="1.02" fill="#181818"/><rect x="1" y="15" width="1.02" height="1.02" fill="#181818"/><rect x="2" y="15" width="1.02" height="1.02" fill="#181818"/><rect x="3" y="15" width="1.02" height="1.02" fill="#181818"/><rect x="4" y="15" width="1.02" height="1.02" fill="#181818"/><rect x="5" y="15" width="1.02" height="1.02" fill="#181818"/><rect x="9" y="15" width="1.02" height="1.02" fill="#181818"/><rect x="10" y="15" width="1.02" height="1.02" fill="#181818"/><rect x="11" y="15" width="1.02" height="1.02" fill="#181818"/><rect x="12" y="15" width="1.02" height="1.02" fill="#181818"/><rect x="13" y="15" width="1.02" height="1.02" fill="#181818"/></svg>
<div class="t" style="left:566px;top:206.3px;width:149px;text-align:center;font-size:23.5px;color:#fff">Clica</div>
<div class="a" style="left:358px;top:178px;width:159px;height:28px;background:#f4f4f4;border:1px solid #a0a0a0;border-radius:3px"></div>
<div class="t" style="left:358px;top:180.20000000000005px;width:159px;text-align:center;font-size:23.9px;color:#404040">Torna</div>
<svg style="left:0;top:0" width="875" height="344" viewBox="0 674 875 344"><path d="M414 741.5L433.5 771.5" stroke="#fff" stroke-width="1.6"/><path d="M429.3 773.8L437.8 768.6L443.8 787Z" fill="#fff"/></svg>
</div>
<div class="a" style="left:877px;top:634px;width:611px;height:19px;background:#1f1f1f;border-radius:4px 4px 0 0"></div>
<div class="a" style="left:877px;top:634px;width:81px;height:19px;background:#2e2e2e;border-radius:4px 4px 0 0"></div>
<svg style="left:886px;top:638px;" width="11" height="10" viewBox="0 0 11 10"><path d="M0 0.5H4L5 2H11V10H0Z" fill="#b2b2b2"/></svg>
<div class="t" style="left:902px;top:638px;font-size:12.5px;color:#b2b2b2;">Project</div>
<svg style="left:1453px;top:638px;" width="9" height="10" viewBox="0 0 9 10"><path d="M7.5 5.6V3.2A2.6 2.6 0 0 0 2.3 3" fill="none" stroke="#b0b0b0" stroke-width="1.1"/><rect x="0.6" y="5.6" width="7.8" height="4" rx="0.6" fill="none" stroke="#b0b0b0" stroke-width="1.1"/></svg>
<svg style="left:1473px;top:638px;" width="3" height="11" viewBox="0 0 3 11"><circle cx="1.5" cy="1.5" r="1.3" fill="#b0b0b0"/><circle cx="1.5" cy="5.5" r="1.3" fill="#b0b0b0"/><circle cx="1.5" cy="9.5" r="1.3" fill="#b0b0b0"/></svg>
<div class="a" style="left:877px;top:653px;width:611px;height:20px;background:#303030;"></div>
<svg style="left:884px;top:657px;" width="12" height="12" viewBox="0 0 12 12"><path d="M6 0V12M0 6H12" stroke="#c0c0c0" stroke-width="1.4"/></svg>
<svg style="left:900px;top:661px;" width="8" height="5" viewBox="0 0 8 5"><path d="M0 0H8L4.0 5Z" fill="#b0b0b0"/></svg>
<div class="a" style="left:1025px;top:655px;width:320px;height:16px;background:#1f1f1f;border-radius:3px;border:1px solid #262626"></div>
<svg style="left:1029px;top:659px;" width="8" height="8" viewBox="0 0 8 8"><circle cx="3" cy="3" r="2.3" fill="none" stroke="#a0a0a0" stroke-width="1.1"/><path d="M4.7 4.7L7.5 7.5" stroke="#a0a0a0" stroke-width="1.4"/></svg>
<div class="a" style="left:1325px;top:656px;width:19px;height:14px;background:#262626;border-radius:0 3px 3px 0"></div>
<svg style="left:1327px;top:657px;" width="13" height="12" viewBox="0 0 13 12"><rect x="0.5" y="6.5" width="4.5" height="4.5" fill="none" stroke="#a8a8a8" stroke-width="1"/><path d="M3 6.5V1H11.5V9.5H5" fill="none" stroke="#a8a8a8" stroke-width="1"/><path d="M5.5 6L9.5 2.5M6.5 2.5H9.5V5.5" fill="none" stroke="#a8a8a8" stroke-width="1"/></svg>
<div class="a" style="left:1347px;top:653px;width:1px;height:20px;background:#222;"></div>
<div class="a" style="left:1372px;top:653px;width:1px;height:20px;background:#222;"></div>
<div class="a" style="left:1397px;top:653px;width:1px;height:20px;background:#222;"></div>
<div class="a" style="left:1423px;top:653px;width:1px;height:20px;background:#222;"></div>
<div class="a" style="left:1448px;top:653px;width:1px;height:20px;background:#222;"></div>
<svg style="left:1351px;top:656px;" width="14" height="13" viewBox="0 0 14 13"><circle cx="4" cy="9" r="3.8" fill="#a0a0a0"/><rect x="3" y="0" width="6" height="6" fill="#a0a0a0"/><path d="M9 2L13 9H7Z" fill="#a0a0a0"/></svg>
<svg style="left:1377px;top:656px;" width="13" height="13" viewBox="0 0 13 13"><path d="M6 0.5H12.5V7L6 13.5L0 7.5Z" fill="#a0a0a0"/><circle cx="9.5" cy="3.5" r="1.2" fill="#2b2b2b"/></svg>
<svg style="left:1402px;top:656px;" width="14" height="14" viewBox="0 0 14 14"><circle cx="7" cy="7" r="7" fill="#a0a0a0"/><rect x="6" y="2.5" width="2" height="6" fill="#2b2b2b"/><rect x="6" y="9.8" width="2" height="2" fill="#2b2b2b"/></svg>
<svg style="left:1428px;top:656px;" width="13" height="13" viewBox="0 0 13 13"><path d="M6.5 0.5L8.3 4.6L12.6 5L9.3 7.8L10.3 12.2L6.5 9.9L2.7 12.2L3.7 7.8L0.4 5L4.7 4.6Z" fill="#8a8a8a"/></svg>
<svg style="left:1455px;top:656px;" width="16" height="14" viewBox="0 0 16 14"><path d="M1 7C4 3 10 3 13 7C10 11 4 11 1 7Z" fill="none" stroke="#a0a0a0" stroke-width="1.2"/><path d="M2 13L12 1" stroke="#a0a0a0" stroke-width="1.3"/><path d="M6 8.5L8.5 6" stroke="#a0a0a0" stroke-width="1"/></svg>
<div class="t" style="left:1470px;top:657px;font-size:13px;color:#a0a0a0;">21</div>
<div class="a" style="left:877px;top:673px;width:611px;height:345px;background:#282828;"></div>
<div class="a" style="left:877px;top:673px;width:611px;height:1px;background:#222;"></div>
<div class="a" style="left:877px;top:674px;width:196px;height:344px;background:#2c2c2c;"></div>
<div class="a" style="left:1073px;top:674px;width:12px;height:344px;background:#2a2a2a;"></div>
<div class="a" style="left:1072px;top:674px;width:1px;height:344px;background:#232323;"></div>
<div class="a" style="left:1085px;top:674px;width:1px;height:344px;background:#1a1a1a;"></div>
<svg style="left:1075px;top:680px;" width="8" height="6" viewBox="0 0 8 6"><path d="M0 6L4 0L8 6Z" fill="#a0a0a0"/></svg>
<svg style="left:1075px;top:1007px;" width="8" height="6" viewBox="0 0 8 6"><path d="M0 0H8L4 6Z" fill="#a0a0a0"/></svg>
<div class="a" style="left:1074px;top:756px;width:10px;height:168px;background:#4a4a4a;border-radius:5px"></div>
<div class="a" style="left:877px;top:1002px;width:196px;height:16px;background:#3a3a3a;"></div>
<div class="a" style="left:877px;top:674px;width:196px;height:344px;overflow:hidden">
<svg style="left:60px;top:-5.5px" width="12" height="10" viewBox="0 0 12 10"><path d="M0 0.5H4.5L5.5 2H12V10H0Z" fill="#aaaaaa"/></svg>
<div class="t" style="left:76px;top:-6.5px;font-size:12.7px;color:#aaaaaa">Backgrounds</div>
<svg style="left:46px;top:12.5px" width="9" height="8" viewBox="0 0 9 8"><path d="M0 0H9L4.5 8Z" fill="#666"/></svg>
<svg style="left:60px;top:10.5px" width="14" height="11" viewBox="0 0 14 11"><path d="M0.6 10.4V0.6H4.4L5.4 1.8H11V3.8H3.2L0.6 10.4ZM0.6 10.4L3.2 4H13.6L11 10.4Z" fill="none" stroke="#aaaaaa" stroke-width="1.2" stroke-linejoin="round"/></svg>
<div class="t" style="left:76px;top:9.5px;font-size:12.7px;color:#aaaaaa">Characters</div>
<svg style="left:60px;top:28.5px" width="9" height="8" viewBox="0 0 9 8"><path d="M0 0H9L4.5 8Z" fill="#666"/></svg>
<svg style="left:74px;top:26.5px" width="14" height="11" viewBox="0 0 14 11"><path d="M0.6 10.4V0.6H4.4L5.4 1.8H11V3.8H3.2L0.6 10.4ZM0.6 10.4L3.2 4H13.6L11 10.4Z" fill="none" stroke="#aaaaaa" stroke-width="1.2" stroke-linejoin="round"/></svg>
<div class="t" style="left:90px;top:25.5px;font-size:12.7px;color:#aaaaaa">Animation</div>
<svg style="left:88px;top:42.5px" width="12" height="10" viewBox="0 0 12 10"><path d="M0 0.5H4.5L5.5 2H12V10H0Z" fill="#aaaaaa"/></svg>
<div class="t" style="left:104px;top:41.5px;font-size:12.7px;color:#aaaaaa">Astronaut</div>
<svg style="left:88px;top:58.5px" width="12" height="10" viewBox="0 0 12 10"><path d="M0 0.5H4.5L5.5 2H12V10H0Z" fill="#aaaaaa"/></svg>
<div class="t" style="left:104px;top:57.5px;font-size:12.7px;color:#aaaaaa">Detective</div>
<svg style="left:60px;top:76.5px" width="9" height="8" viewBox="0 0 9 8"><path d="M0 0H9L4.5 8Z" fill="#666"/></svg>
<svg style="left:74px;top:74.5px" width="14" height="11" viewBox="0 0 14 11"><path d="M0.6 10.4V0.6H4.4L5.4 1.8H11V3.8H3.2L0.6 10.4ZM0.6 10.4L3.2 4H13.6L11 10.4Z" fill="none" stroke="#aaaaaa" stroke-width="1.2" stroke-linejoin="round"/></svg>
<div class="t" style="left:90px;top:73.5px;font-size:12.7px;color:#aaaaaa">Blob Players</div>
<svg style="left:88px;top:90.5px" width="12" height="10" viewBox="0 0 12 10"><path d="M0 0.5H4.5L5.5 2H12V10H0Z" fill="#aaaaaa"/></svg>
<div class="t" style="left:104px;top:89.5px;font-size:12.7px;color:#aaaaaa">Animation</div>
<svg style="left:74px;top:106.5px" width="12" height="10" viewBox="0 0 12 10"><path d="M0 0.5H4.5L5.5 2H12V10H0Z" fill="#aaaaaa"/></svg>
<div class="t" style="left:90px;top:105.5px;font-size:12.7px;color:#aaaaaa">Fantasy</div>
<svg style="left:61px;top:123.5px" width="8" height="9" viewBox="0 0 8 9"><path d="M0 0L8 4.5L0 9Z" fill="#666"/></svg>
<svg style="left:74px;top:122.5px" width="12" height="10" viewBox="0 0 12 10"><path d="M0 0.5H4.5L5.5 2H12V10H0Z" fill="#aaaaaa"/></svg>
<div class="t" style="left:90px;top:121.5px;font-size:12.7px;color:#aaaaaa">Soldiers</div>
<svg style="left:74px;top:138.5px" width="12" height="10" viewBox="0 0 12 10"><path d="M0 0.5H4.5L5.5 2H12V10H0Z" fill="#aaaaaa"/></svg>
<div class="t" style="left:90px;top:137.5px;font-size:12.7px;color:#aaaaaa">Stickman</div>
<svg style="left:47px;top:155.5px" width="8" height="9" viewBox="0 0 8 9"><path d="M0 0L8 4.5L0 9Z" fill="#666"/></svg>
<svg style="left:60px;top:154.5px" width="12" height="10" viewBox="0 0 12 10"><path d="M0 0.5H4.5L5.5 2H12V10H0Z" fill="#aaaaaa"/></svg>
<div class="t" style="left:76px;top:153.5px;font-size:12.7px;color:#aaaaaa">Effects</div>
<svg style="left:47px;top:171.5px" width="8" height="9" viewBox="0 0 8 9"><path d="M0 0L8 4.5L0 9Z" fill="#666"/></svg>
<svg style="left:60px;top:170.5px" width="12" height="10" viewBox="0 0 12 10"><path d="M0 0.5H4.5L5.5 2H12V10H0Z" fill="#aaaaaa"/></svg>
<div class="t" style="left:76px;top:169.5px;font-size:12.7px;color:#aaaaaa">Enemies</div>
<svg style="left:47px;top:187.5px" width="8" height="9" viewBox="0 0 8 9"><path d="M0 0L8 4.5L0 9Z" fill="#666"/></svg>
<svg style="left:60px;top:186.5px" width="12" height="10" viewBox="0 0 12 10"><path d="M0 0.5H4.5L5.5 2H12V10H0Z" fill="#aaaaaa"/></svg>
<div class="t" style="left:76px;top:185.5px;font-size:12.7px;color:#aaaaaa">Environment</div>
<svg style="left:60px;top:202.5px" width="12" height="10" viewBox="0 0 12 10"><path d="M0 0.5H4.5L5.5 2H12V10H0Z" fill="#aaaaaa"/></svg>
<div class="t" style="left:76px;top:201.5px;font-size:12.7px;color:#aaaaaa">Extra</div>
<svg style="left:47px;top:219.5px" width="8" height="9" viewBox="0 0 8 9"><path d="M0 0L8 4.5L0 9Z" fill="#666"/></svg>
<svg style="left:60px;top:218.5px" width="12" height="10" viewBox="0 0 12 10"><path d="M0 0.5H4.5L5.5 2H12V10H0Z" fill="#aaaaaa"/></svg>
<div class="t" style="left:76px;top:217.5px;font-size:12.7px;color:#aaaaaa">Food &amp; Plants</div>
<svg style="left:47px;top:235.5px" width="8" height="9" viewBox="0 0 8 9"><path d="M0 0L8 4.5L0 9Z" fill="#666"/></svg>
<svg style="left:60px;top:234.5px" width="12" height="10" viewBox="0 0 12 10"><path d="M0 0.5H4.5L5.5 2H12V10H0Z" fill="#aaaaaa"/></svg>
<div class="t" style="left:76px;top:233.5px;font-size:12.7px;color:#aaaaaa">Items &amp; Icons</div>
<svg style="left:60px;top:250.5px" width="12" height="10" viewBox="0 0 12 10"><path d="M0 0.5H4.5L5.5 2H12V10H0Z" fill="#aaaaaa"/></svg>
<div class="t" style="left:76px;top:249.5px;font-size:12.7px;color:#aaaaaa">Platforms</div>
<svg style="left:60px;top:266.5px" width="12" height="10" viewBox="0 0 12 10"><path d="M0 0.5H4.5L5.5 2H12V10H0Z" fill="#aaaaaa"/></svg>
<div class="t" style="left:76px;top:265.5px;font-size:12.7px;color:#aaaaaa">Shapes</div>
<svg style="left:60px;top:282.5px" width="12" height="10" viewBox="0 0 12 10"><path d="M0 0.5H4.5L5.5 2H12V10H0Z" fill="#aaaaaa"/></svg>
<div class="t" style="left:76px;top:281.5px;font-size:12.7px;color:#aaaaaa">Sounds</div>
<svg style="left:47px;top:299.5px" width="8" height="9" viewBox="0 0 8 9"><path d="M0 0L8 4.5L0 9Z" fill="#666"/></svg>
<svg style="left:60px;top:298.5px" width="12" height="10" viewBox="0 0 12 10"><path d="M0 0.5H4.5L5.5 2H12V10H0Z" fill="#aaaaaa"/></svg>
<div class="t" style="left:76px;top:297.5px;font-size:12.7px;color:#aaaaaa">UI</div>
<svg style="left:60px;top:314.5px" width="12" height="10" viewBox="0 0 12 10"><path d="M0 0.5H4.5L5.5 2H12V10H0Z" fill="#aaaaaa"/></svg>
<div class="t" style="left:76px;top:313.5px;font-size:12.7px;color:#aaaaaa">Weapons &amp; Tools</div>
<svg style="left:32px;top:330.5px" width="12" height="10" viewBox="0 0 12 10"><path d="M0 0.5H4.5L5.5 2H12V10H0Z" fill="#aaaaaa"/></svg>
<div class="t" style="left:48px;top:329.5px;font-size:12.7px;color:#aaaaaa">Scenes</div>
</div>
<div class="a" style="left:1086px;top:674px;width:402px;height:21px;background:#353535;"></div>
<div class="t" style="left:1090px;top:678.5px;font-size:12.6px;color:#8c8c8c;">Assets</div>
<svg style="left:1137px;top:680px;" width="6" height="10" viewBox="0 0 6 10"><path d="M0.5 0.5L5 5L0.5 9.5" fill="none" stroke="#8c8c8c" stroke-width="1.1"/></svg>
<div class="t" style="left:1147px;top:677.6px;font-size:13.1px;color:#c4c4c4;font-weight:bold">Scenes</div>
<svg style="left:1104px;top:696px;" width="12" height="14" viewBox="0 0 12 14"><g fill="none" stroke="#d4d4d4" stroke-width="2.1"><path d="M4.6 0.8L0.9 3.2V9.2M7.4 0.8L11.1 3.2V9.2M2.8 5.8L6 7.8L9.2 5.8M6 7.8V12.6M1.8 10.8L6 13.3L10.2 10.8"/></g></svg>
<div class="t" style="left:1120px;top:696.5px;font-size:13.6px;color:#b8b8b8;">Character</div>
<svg style="left:1104px;top:712px;" width="12" height="14" viewBox="0 0 12 14"><g fill="none" stroke="#d4d4d4" stroke-width="2.1"><path d="M4.6 0.8L0.9 3.2V9.2M7.4 0.8L11.1 3.2V9.2M2.8 5.8L6 7.8L9.2 5.8M6 7.8V12.6M1.8 10.8L6 13.3L10.2 10.8"/></g></svg>
<div class="t" style="left:1120px;top:712.5px;font-size:13.6px;color:#b8b8b8;">Portada</div>
<div class="a" style="left:1086px;top:997px;width:402px;height:21px;background:#2e2e2e;"></div>
<div class="a" style="left:1425px;top:1007px;width:47px;height:1.5px;background:#555;"></div>
<div class="a" style="left:1417px;top:1003px;width:9px;height:9px;background:#8a8a8a;border-radius:50%"></div>
<div class="a" style="left:0px;top:1018px;width:1920px;height:22px;background:#131313;"></div>
<svg style="left:4px;top:1023px;" width="12" height="12" viewBox="0 0 12 12"><circle cx="6" cy="6" r="6" fill="#c8c8c8"/><rect x="5.1" y="2.3" width="1.8" height="5" fill="#131313"/><rect x="5.1" y="8.3" width="1.8" height="1.6" fill="#131313"/></svg>
<div class="t" style="left:20px;top:1023px;font-size:12.65px;color:#a8a8a8;">[TMP Essential Resources] have been imported.</div>
<div class="a" style="left:1816px;top:1020px;width:1px;height:18px;background:#1c1c1c;"></div>
<div class="a" style="left:1841px;top:1020px;width:1px;height:18px;background:#1c1c1c;"></div>
<div class="a" style="left:1867px;top:1020px;width:1px;height:18px;background:#1c1c1c;"></div>
<div class="a" style="left:1893px;top:1020px;width:1px;height:18px;background:#1c1c1c;"></div>
<svg style="left:1821px;top:1023px;" width="14" height="14" viewBox="0 0 14 14"><path d="M3 5.5A4 4.5 0 0 1 11 5.5V9.5A4 4 0 0 1 3 9.5Z" fill="#a0a0a0"/><circle cx="7" cy="3" r="2.2" fill="#a0a0a0"/><path d="M1.5 3.5L3.2 5.5M12.5 3.5L10.8 5.5M0.5 8.5H3.2M13.5 8.5H10.8M1.5 13.5L3.2 11.5M12.5 13.5L10.8 11.5" stroke="#a0a0a0" stroke-width="1.2"/><path d="M0.5 0.5L13.5 13.5" stroke="#131313" stroke-width="1.6"/><path d="M0.5 0.5L13.5 13.5" stroke="#a0a0a0" stroke-width="0.6"/></svg>
<svg style="left:1847px;top:1023px;" width="13" height="14" viewBox="0 0 13 14"><ellipse cx="6.5" cy="2.6" rx="6" ry="2.4" fill="#a0a0a0"/><path d="M0.5 4.6V6.6A6 2.4 0 0 0 12.5 6.6V4.6A6 2.4 0 0 1 0.5 4.6Z" fill="#a0a0a0"/><path d="M0.5 9V11.2A6 2.4 0 0 0 12.5 11.2V9A6 2.4 0 0 1 0.5 9Z" fill="#a0a0a0"/><path d="M0.5 0.5L13 13.5" stroke="#131313" stroke-width="1.6"/><path d="M0.5 0.5L13 13.5" stroke="#a0a0a0" stroke-width="0.6"/></svg>
<svg style="left:1873px;top:1023px;" width="14" height="14" viewBox="0 0 14 14"><path d="M2.5 3A6 6 0 0 1 11.5 3M11.5 11A6 6 0 0 1 2.5 11M1 5.5A6 6 0 0 0 1 8.5M13 5.5A6 6 0 0 1 13 8.5" fill="none" stroke="#a0a0a0" stroke-width="1.3"/><circle cx="7" cy="6" r="2.6" fill="#a0a0a0"/><rect x="6" y="8.5" width="2" height="2" fill="#a0a0a0"/><path d="M1 0.5L13 13.5" stroke="#131313" stroke-width="1.6"/><path d="M1 0.5L13 13.5" stroke="#a0a0a0" stroke-width="0.6"/></svg>
<svg style="left:1899px;top:1023px;" width="14" height="14" viewBox="0 0 14 14"><circle cx="7" cy="7" r="6.3" fill="none" stroke="#a0a0a0" stroke-width="1.1"/><path d="M4 7L6.2 9.2L10 5.2" fill="none" stroke="#a0a0a0" stroke-width="1.3"/></svg>
<div class="a" style="left:0px;top:1040px;width:1920px;height:40px;background:#1b1b1b;"></div>
<svg style="left:16px;top:1052px;" width="17" height="16" viewBox="0 0 17 16"><path d="M0 2.2L7 1.2V7.5H0ZM8 1L17 0V7.5H8ZM0 8.5H7V14.8L0 13.8ZM8 8.5H17V16L8 15Z" fill="#fff"/></svg>
<div class="a" style="left:48px;top:1040px;width:287px;height:40px;background:#303030;border:1px solid #464646;border-bottom:none"></div>
<svg style="left:60px;top:1052px;" width="17" height="17" viewBox="0 0 17 17"><circle cx="10.5" cy="6.5" r="5.5" fill="none" stroke="#e8e8e8" stroke-width="1.3"/><path d="M6.5 10.5L0.8 16.2" stroke="#e8e8e8" stroke-width="1.4"/></svg>
<div class="t" style="left:88px;top:1053px;font-size:14.3px;color:#e4e4e4;">Escriu aquí per cercar</div>
<svg style="left:256px;top:1041px;" width="80" height="39" viewBox="0 0 80 39"><path d="M1 39L17 24H79V39Z" fill="#dcc09a"/><path d="M17 24H79V26H15Z" fill="#e8d2b0"/><g transform="rotate(-14 26 21)"><path d="M12 12L26 14L40 10V30L26 33L12 31Z" fill="#4aa84a"/><path d="M13 10Q19 9 26 12V31Q19 28 13 29Z" fill="#ecebf5"/><path d="M26 12Q33 8 39 9V28Q33 27 26 31Z" fill="#f4f3fb"/><path d="M16 15L23 16M16 18L23 19M16 21L23 22M16 24L23 25M29 15L36 13M29 18L36 16M29 21L36 19" stroke="#a8a8c0" stroke-width="0.8"/></g><path d="M31 20L40 8L43 10L34 22L30 23Z" fill="#f5b83a"/><path d="M40 8L42 5.5L45 7.5L43 10Z" fill="#ef6a6a"/><path d="M50 14Q50 4 59.5 4Q69 4 69 14V30Q69 33 66 33H53Q50 33 50 30Z" fill="#2d8cf0"/><path d="M56 4.5Q56 1 59.5 1Q63 1 63 4.5" fill="none" stroke="#2d8cf0" stroke-width="1.6"/><path d="M52 27Q52 19 59.5 19Q67 19 67 27V30H52Z" fill="#1f6fe0"/><path d="M52 28.5H67" stroke="#b07af0" stroke-width="1.2"/><path d="M51.5 12Q54 6 59.5 6" fill="none" stroke="#7cc0ff" stroke-width="0.8"/></svg>
<svg style="left:351px;top:1051px;" width="18" height="18" viewBox="0 0 18 18"><circle cx="9" cy="8.8" r="6.6" fill="none" stroke="#f2f2f2" stroke-width="1.9"/></svg>
<svg style="left:399px;top:1052px;" width="18" height="16" viewBox="0 0 18 16"><path d="M0.6 0V1.3H10.4V0M0.6 15V13.7H10.4V15" fill="none" stroke="#f2f2f2" stroke-width="1.2"/><rect x="0.6" y="3.8" width="9.8" height="7.4" fill="none" stroke="#f2f2f2" stroke-width="1.2"/><rect x="13.4" y="3" width="2.6" height="2.6" fill="#f2f2f2"/><path d="M14.7 6.8V15" stroke="#f2f2f2" stroke-width="1.2"/></svg>
<svg style="left:447px;top:1048px;" width="24" height="24" viewBox="0 0 24 24"><rect x="0" y="0" width="24" height="24" rx="3" fill="#f57d22"/><path d="M3 3.5H21" stroke="#f8a868" stroke-width="1.6"/><g fill="#fff"><circle cx="7.8" cy="8.8" r="4.5"/><circle cx="16.2" cy="8.8" r="4.5"/><circle cx="7.8" cy="15.2" r="4.5"/><circle cx="16.2" cy="15.2" r="4.5"/><rect x="4" y="9" width="16" height="6"/></g><path d="M7.9 8.5V15.6M16.1 8.5V15.6M7.9 12H16.1" stroke="#f57d22" stroke-width="2.4" stroke-linecap="round" fill="none"/></svg>
<svg style="left:496px;top:1049px;" width="24" height="22" viewBox="0 0 24 22"><path d="M0 3H9L11 5H24V21H0Z" fill="#f5c342"/><path d="M0 7H24V21H0Z" fill="#ffd867"/><path d="M6 14H18V21H15V17H9V21H6Z" fill="#2f7fd6"/></svg>
<svg style="left:545px;top:1048px;" width="24" height="24" viewBox="0 0 24 24"><circle cx="12" cy="12" r="12" fill="#db4437"/><path d="M12 12L1.6 6A12 12 0 0 0 12 24Z" fill="#0f9d58"/><path d="M12 12L22.4 6A12 12 0 0 1 12 24Z" fill="#ffcd40"/><path d="M12 12H22.4A12 12 0 0 1 12 24Z" fill="#ffcd40"/><circle cx="12" cy="12" r="5.4" fill="#fff"/><circle cx="12" cy="12" r="4.3" fill="#4285f4"/></svg>
<svg style="left:594px;top:1048px;" width="24" height="24" viewBox="0 0 24 24"><path d="M17 0L24 3.5V20.5L17 24L6 14L2 17L0 16V8L2 7L6 10ZM17 6.5L10 12L17 17.5Z" fill="#23a8f2"/><path d="M17 0L24 3.5V20.5L17 24Z" fill="#0c7ed1"/></svg>
<div class="a" style="left:631px;top:1040px;width:48px;height:40px;background:#525252;"></div>
<svg style="left:644px;top:1048px;" width="22" height="24" viewBox="0 0 22 24"><path d="M11 0.5L21 6.2V17.8L11 23.5L1 17.8V6.2Z" fill="#3c3c3c"/><path d="M11 23.5L21 17.8V6.2L11 12Z" fill="#1e1e1e"/><path d="M11 4.5L17 8V15L11 18.5L5 15V8Z" fill="#f4f4f4"/><path d="M11 11.5V18.5M11 11.5L5 8M11 11.5L17 8" stroke="#2a2a2a" stroke-width="2"/><path d="M11 4.5V7M5 15L7.2 13.7M17 15L14.8 13.7" stroke="#2a2a2a" stroke-width="1"/></svg>
<svg style="left:693px;top:1048px;" width="23" height="22" viewBox="0 0 23 22"><rect x="0.6" y="0.6" width="21.8" height="20.8" fill="#001a3a" stroke="#5aaef0" stroke-width="1.2"/><text x="3.6" y="15.5" font-family="Liberation Sans" font-size="11" font-weight="bold" fill="#8fd0ff">Ps</text></svg>
<svg style="left:741px;top:1048px;" width="24" height="24" viewBox="0 0 24 24"><path d="M17 1L24 4V20L17 23Z" fill="#c79cf5"/><path d="M0.5 8L3.5 6.5L17 17.5V23L0.5 10.5Z" fill="#8a5cc8"/><path d="M0.5 16L3.5 17.5L17 6.5V1L0.5 13.5Z" fill="#9f72dc"/><path d="M0.5 8V16L3.5 17.5V6.5Z" fill="#7b4fb8"/></svg>
<div class="a" style="left:631px;top:1078px;width:48px;height:2px;background:#76b9ed;"></div>
<div class="a" style="left:684px;top:1078px;width:40px;height:2px;background:#76b9ed;"></div>
<div class="a" style="left:733px;top:1078px;width:40px;height:2px;background:#76b9ed;"></div>
<svg style="left:1477px;top:1049px;" width="28" height="22" viewBox="0 0 28 22"><circle cx="18" cy="9" r="6" fill="#f7a21b"/><path d="M5 21A5 5 0 0 1 4.5 11A7 7 0 0 1 17.5 10A5.5 5.5 0 0 1 21 21Z" fill="#dfe9f5"/><path d="M5 21H21A5.5 5.5 0 0 0 22 15A8 8 0 0 1 5 21Z" fill="#9fc2ea"/></svg>
<div class="t" style="left:1511px;top:1053px;font-size:12.8px;color:#f0f0f0;">19°C</div>
<div class="t" style="left:1549px;top:1053px;font-size:14px;color:#f0f0f0;">Mayorm. nubla...</div>
<svg style="left:1676px;top:1055px;" width="12" height="7" viewBox="0 0 12 7"><path d="M0.5 6.5L6 1L11.5 6.5" fill="none" stroke="#f0f0f0" stroke-width="1.2"/></svg>
<svg style="left:1699px;top:1053px;" width="17" height="13" viewBox="0 0 17 13"><rect x="3" y="4" width="12" height="8" fill="none" stroke="#f0f0f0" stroke-width="1.1"/><rect x="5" y="6" width="7" height="4" fill="#f0f0f0"/><path d="M15.5 6.5V9.5M3 0V4M1 2H5" stroke="#f0f0f0" stroke-width="1.1"/></svg>
<svg style="left:1725px;top:1052px;" width="17" height="15" viewBox="0 0 17 15"><path d="M1 14A14 14 0 0 1 15 1M4 14A11 11 0 0 1 15 4M7 14A8 8 0 0 1 15 7M10 14A5 5 0 0 1 15 10" fill="none" stroke="#f0f0f0" stroke-width="1.1"/><circle cx="14.5" cy="13.5" r="1.5" fill="#f0f0f0"/></svg>
<svg style="left:1747px;top:1052px;" width="17" height="15" viewBox="0 0 17 15"><path d="M0.5 5H3.5L7.5 1V14L3.5 10H0.5Z" fill="none" stroke="#f0f0f0" stroke-width="1.1"/><path d="M10 5A3.5 3.5 0 0 1 10 10M12.5 3A6.5 6.5 0 0 1 12.5 12M15 1A9.5 9.5 0 0 1 15 14" fill="none" stroke="#f0f0f0" stroke-width="1.1"/></svg>
<div class="t" style="left:1774px;top:1054px;font-size:11.6px;color:#f0f0f0;">CAT</div>
<div class="t" style="left:1821px;top:1045px;font-size:11.6px;color:#f0f0f0;">14:21</div>
<div class="t" style="left:1810px;top:1063px;font-size:11.6px;color:#f0f0f0;">19/2/2024</div>
<svg style="left:1879px;top:1051px;" width="17" height="18" viewBox="0 0 17 18"><path d="M0.5 0.5H16.5V13H8L5 16.5V13H0.5Z" fill="#f0f0f0"/><path d="M3.5 4H13.5M3.5 6.8H13.5M3.5 9.6H10" stroke="#1b1b1b" stroke-width="1.1"/></svg>
<div class="a" style="left:1914px;top:1044px;width:1px;height:36px;background:#5a5a5a;"></div>
</body></html>
